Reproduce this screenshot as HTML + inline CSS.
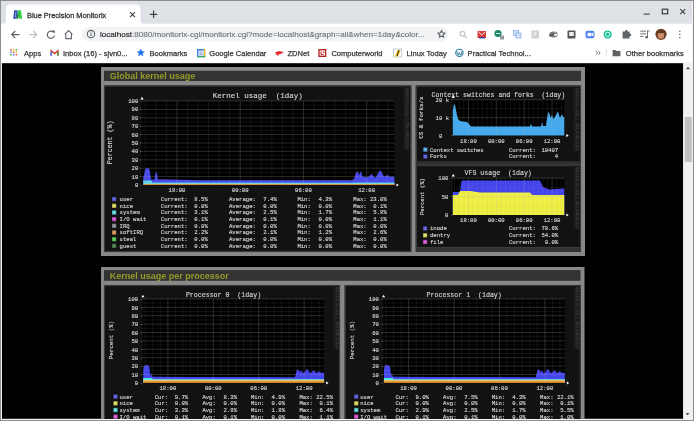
<!DOCTYPE html>
<html><head><meta charset="utf-8"><title>Blue Precision Monitorix</title>
<style>html,body{margin:0;padding:0;width:694px;height:421px;overflow:hidden;background:#000}svg{display:block;will-change:transform}</style></head>
<body><svg width="694" height="421" viewBox="0 0 694 421">
<rect x="0" y="0" width="694" height="421" fill="#8e8e8e"/>
<rect x="1" y="1" width="692" height="419" fill="#f4f4f6"/>
<rect x="1" y="1" width="691" height="22.8" fill="#dee1e6"/>
<path d="M3,24 Q6,24 6,20 L6,9 Q6,4.5 10.5,4.5 L136,4.5 Q140.5,4.5 140.5,9 L140.5,20 Q140.5,24 144,24 Z" fill="#ffffff"/>
<rect x="1" y="23.8" width="691" height="38.7" fill="#ffffff"/>
<path d="M13.2,18.7 L14.2,10.2 L17.4,10.2 L17.8,13 L16.4,18.7 Z" fill="#2a44aa"/><path d="M14.6,17.5 L15.4,11.5 L16.6,11.5 L15.8,17.5 Z" fill="#7a9ae8"/><path d="M17.6,10.2 L21,10.2 L22.2,18.7 L19,18.7 L18.6,15.5 L17.8,18.7 L16.4,18.7 L17.8,13 Z" fill="#36d048"/><path d="M17.8,13 L18.8,15.5 L18.2,18.7 L16.6,18.7 Z" fill="#1f7a3a"/>
<text x="27" y="17.6" font-family="'Liberation Sans', sans-serif" font-size="7.4" fill="#333538" stroke="#333538" stroke-width="0.28">Blue Precision Monitorix</text>
<path d="M130,12.2 L135,17.2 M135,12.2 L130,17.2" stroke="#3c4043" stroke-width="1.1"/>
<path d="M153.6,10.6 L153.6,18 M149.9,14.3 L157.3,14.3" stroke="#3c4043" stroke-width="1.2"/>
<path d="M643.7,14.1 L649.8,14.1" stroke="#3c4043" stroke-width="1.1"/>
<rect x="662.3" y="9.2" width="5.4" height="4.6" fill="none" stroke="#3c4043" stroke-width="1.2"/>
<path d="M680.3,9.2 L685.2,14.2 M685.2,9.2 L680.3,14.2" stroke="#3c4043" stroke-width="1.1"/>
<path d="M12,34.6 L19.5,34.6 M15.3,31 L11.7,34.6 L15.3,38.2" fill="none" stroke="#5f6368" stroke-width="1.2"/>
<path d="M36.5,34.6 L29,34.6 M33.2,31 L36.8,34.6 L33.2,38.2" fill="none" stroke="#bdc1c6" stroke-width="1.2"/>
<path d="M53.6,32.3 A3.6,3.6 0 1 0 54.4,35.6" fill="none" stroke="#5f6368" stroke-width="1.2"/><path d="M51.6,30.4 L54.8,30.4 L54.8,33.6 Z" fill="#5f6368"/>
<path d="M64.8,34.4 L68.6,30.6 L72.4,34.4 M65.8,33.6 L65.8,38.6 L71.4,38.6 L71.4,33.6" fill="none" stroke="#5f6368" stroke-width="1.1"/>
<rect x="81.6" y="26.9" width="367" height="14.5" rx="7.25" fill="#f2f3f5"/>
<circle cx="91" cy="34.1" r="3.7" fill="none" stroke="#5f6368" stroke-width="1.1"/><path d="M91,33.3 L91,36.3 M91,31.7 L91,32.6" stroke="#5f6368" stroke-width="1.1"/>
<text x="100" y="37.3" font-family="'Liberation Sans', sans-serif" font-size="8.1" fill="#202124" stroke="#202124" stroke-width="0.15">localhost<tspan fill="#70757a" stroke="#70757a">:8080/monitorix-cgi/monitorix.cgi?mode=localhost&amp;graph=all&amp;when=1day&amp;color...</tspan></text>
<polygon points="441.50,30.40 442.51,32.82 445.11,33.03 443.13,34.73 443.73,37.27 441.50,35.91 439.27,37.27 439.87,34.73 437.89,33.03 440.49,32.82" fill="none" stroke="#5f6368" stroke-width="1.1" stroke-linejoin="round"/>
<circle cx="462.5" cy="33.8" r="2.4" fill="none" stroke="#c6c6c6" stroke-width="1.2"/><path d="M464.3,35.6 L467,38.3" stroke="#c6c6c6" stroke-width="1.4"/>
<rect x="477.5" y="31" width="8.5" height="7" fill="#d93a3a"/><path d="M478.5,32 L481.8,35 L485,32" fill="none" stroke="#fff" stroke-width="0.9"/><rect x="479" y="37" width="6" height="1.4" fill="#3a3aa0"/>
<circle cx="498" cy="33.5" r="3.6" fill="#1a8a6e"/><path d="M496,33.5 L500,33.5" stroke="#fff" stroke-width="0.9"/><rect x="500" y="35.5" width="4" height="4" fill="#9a9a9a"/>
<rect x="513.5" y="30.5" width="5" height="5" fill="#d5e2f7" stroke="#7aa4e8" stroke-width="0.7"/><rect x="516" y="33" width="5" height="5" fill="#d5e2f7" stroke="#7aa4e8" stroke-width="0.7"/>
<rect x="531.5" y="30.5" width="7.5" height="8" fill="#d0d0d0"/><rect x="533.5" y="32" width="3" height="4" fill="#e6e6e6"/>
<ellipse cx="553.5" cy="34.5" rx="4.2" ry="3" fill="#777"/><circle cx="555.5" cy="34.3" r="1.8" fill="#fff"/><path d="M549,36 L557,33" stroke="#333" stroke-width="0.8"/>
<rect x="567.5" y="30.5" width="8" height="8" rx="1" fill="#555"/><rect x="569.2" y="32" width="4.6" height="4" fill="#eee"/>
<rect x="585.5" y="30.8" width="9" height="7.5" rx="2.2" fill="#4a80f0"/><rect x="587.5" y="32.8" width="3.8" height="3.4" fill="#fff"/><path d="M591.6,33.5 L593.4,32.6 L593.4,36.4 L591.6,35.5 Z" fill="#fff"/>
<circle cx="607.6" cy="34.4" r="4" fill="#15c39a"/><circle cx="607.6" cy="34.4" r="2.2" fill="none" stroke="#fff" stroke-width="0.9"/>
<path d="M622.6,31.5 L625,31.5 Q625.2,29.8 626.4,29.8 Q627.6,29.8 627.6,31.5 L629.6,31.5 L629.6,33.6 Q631.4,33.8 631.4,35 Q631.4,36.2 629.6,36.3 L629.6,38.6 L622.6,38.6 Z" fill="#5f6368"/>
<path d="M640.2,31.2 L646,31.2 M640.2,33.8 L646,33.8 M640.2,36.4 L643.6,36.4" stroke="#5f6368" stroke-width="0.9"/><path d="M647.5,30.5 L647.5,37 M647.5,30.5 L649.5,31.2" stroke="#5f6368" stroke-width="0.9" fill="none"/><circle cx="646.6" cy="37.2" r="1.3" fill="#5f6368"/>
<circle cx="661" cy="34.3" r="5.6" fill="#6b3e24"/><ellipse cx="661" cy="35.3" rx="3.2" ry="3.8" fill="#c98b6a"/><path d="M657.6,33 Q661,28.6 664.4,33" fill="#5a3220"/>
<circle cx="679.8" cy="31.3" r="0.75" fill="#5f6368"/><circle cx="679.8" cy="34.5" r="0.75" fill="#5f6368"/><circle cx="679.8" cy="37.7" r="0.75" fill="#5f6368"/>
<rect x="10.2" y="49.2" width="1.5" height="1.5" fill="#ea4335"/>
<rect x="12.9" y="49.2" width="1.5" height="1.5" fill="#fbbc04"/>
<rect x="15.6" y="49.2" width="1.5" height="1.5" fill="#34a853"/>
<rect x="10.2" y="51.6" width="1.5" height="1.5" fill="#4285f4"/>
<rect x="12.9" y="51.6" width="1.5" height="1.5" fill="#ea4335"/>
<rect x="15.6" y="51.6" width="1.5" height="1.5" fill="#fbbc04"/>
<rect x="10.2" y="54.0" width="1.5" height="1.5" fill="#34a853"/>
<rect x="12.9" y="54.0" width="1.5" height="1.5" fill="#4285f4"/>
<rect x="15.6" y="54.0" width="1.5" height="1.5" fill="#ea4335"/>
<text x="24" y="55.6" font-family="'Liberation Sans', sans-serif" font-size="7.55" fill="#333538" stroke="#333538" stroke-width="0.25">Apps</text>
<path d="M51.2,55.8 L51.2,50.8 L54.6,53.6 L58,50.8 L58,55.8" fill="none" stroke="#ea4335" stroke-width="1.5"/><path d="M51.2,55.8 L51.2,51.4" stroke="#4285f4" stroke-width="1.5"/><path d="M58,55.8 L58,51.4" stroke="#34a853" stroke-width="1.5"/>
<text x="63" y="55.6" font-family="'Liberation Sans', sans-serif" font-size="7.55" fill="#333538" stroke="#333538" stroke-width="0.25">Inbox (16) - sjvn0...</text>
<polygon points="140.80,49.00 141.81,51.42 144.41,51.63 142.43,53.33 143.03,55.87 140.80,54.51 138.57,55.87 139.17,53.33 137.19,51.63 139.79,51.42" fill="#1a73e8" stroke="#1a73e8" stroke-width="0.5" stroke-linejoin="round"/>
<text x="149.5" y="55.6" font-family="'Liberation Sans', sans-serif" font-size="7.55" fill="#333538" stroke="#333538" stroke-width="0.25">Bookmarks</text>
<rect x="197" y="49" width="8.2" height="8.2" fill="#4285f4"/><rect x="203.8" y="49" width="1.4" height="8.2" fill="#fbbc04"/><rect x="197" y="55.8" width="8.2" height="1.4" fill="#34a853"/><rect x="198.4" y="50.6" width="5.4" height="5.2" fill="#f4f7fc"/><path d="M199.4,52 L202.8,52 M199.4,53.3 L202.8,53.3 M199.4,54.6 L202.8,54.6" stroke="#6a7fa8" stroke-width="0.6"/>
<text x="209.3" y="55.6" font-family="'Liberation Sans', sans-serif" font-size="7.55" fill="#333538" stroke="#333538" stroke-width="0.25">Google Calendar</text>
<path d="M275,52.6 L279,51 L284,52.2 L280,54.2 L277,55 Z" fill="#e3302f"/><path d="M276,54 L278.5,55.5" stroke="#e3302f" stroke-width="1"/>
<text x="287.5" y="55.6" font-family="'Liberation Sans', sans-serif" font-size="7.55" fill="#333538" stroke="#333538" stroke-width="0.25">ZDNet</text>
<rect x="318.3" y="49" width="8" height="8" fill="#b3261e"/><rect x="319.6" y="50.3" width="5.4" height="5.4" fill="#f7e6e6"/><path d="M321,51.5 L321,54.5 L323.6,54.5 M323.6,51.5 L323.6,53" stroke="#b3261e" stroke-width="0.9" fill="none"/>
<text x="331.4" y="55.6" font-family="'Liberation Sans', sans-serif" font-size="7.55" fill="#333538" stroke="#333538" stroke-width="0.25">Computerworld</text>
<rect x="393.3" y="49" width="8.5" height="8" fill="#fff" stroke="#9ab" stroke-width="0.6"/><path d="M395,56.5 L397.5,50 L400.5,50 L398,56.5 Z" fill="#f2c20c"/><path d="M397,56 L399,50.2" stroke="#222" stroke-width="1"/>
<text x="406.6" y="55.6" font-family="'Liberation Sans', sans-serif" font-size="7.55" fill="#333538" stroke="#333538" stroke-width="0.25">Linux Today</text>
<circle cx="459.4" cy="52.9" r="4.2" fill="#21759b"/><circle cx="459.4" cy="52.9" r="3.2" fill="#fff"/><path d="M456.6,51 L458,55.5 L459.4,52.5 L460.8,55.5 L462.2,51" fill="none" stroke="#21759b" stroke-width="0.9"/>
<text x="467.6" y="55.6" font-family="'Liberation Sans', sans-serif" font-size="7.55" fill="#333538" stroke="#333538" stroke-width="0.25">Practical Technol...</text>
<path d="M595.8,51.2 L597.6,52.9 L595.8,54.6 M598.4,51.2 L600.2,52.9 L598.4,54.6" fill="none" stroke="#5f6368" stroke-width="0.9"/>
<rect x="606.2" y="49" width="0.7" height="8" fill="#dadce0"/>
<path d="M612.6,50 L615.6,50 L616.6,51 L620.4,51 L620.4,56.2 L612.6,56.2 Z" fill="#5f6368"/>
<text x="625.8" y="55.6" font-family="'Liberation Sans', sans-serif" font-size="7.55" fill="#333538" stroke="#333538" stroke-width="0.25">Other bookmarks</text>
<rect x="2" y="63.2" width="681.2" height="355.6" fill="#000"/>
<rect x="683.2" y="62.5" width="9.6" height="356.3" fill="#f1f1f1"/>
<rect x="684.8" y="117" width="7" height="45" fill="#c1c1c1"/>
<path d="M685.8,69.2 L690.2,69.2 L688,66.8 Z" fill="#505050"/>
<path d="M685.5,413 L689.5,413 L687.5,415.2 Z" fill="#505050"/>
<svg x="2" y="62.5" width="681.5" height="356.5" viewBox="2 62.5 681.5 356.5" overflow="hidden">
<defs><linearGradient id="og" x1="0" y1="0" x2="0" y2="1"><stop offset="0" stop-color="#e8d890"/><stop offset="0.5" stop-color="#e0a040"/><stop offset="1" stop-color="#c87818"/></linearGradient></defs>
<rect x="101" y="67" width="484" height="189" fill="#888888"/>
<rect x="104" y="70.8" width="477" height="10.2" fill="#333333"/>
<text x="109.8" y="78.7" font-family="'Liberation Sans', sans-serif" font-size="9" font-weight="bold" fill="#979a28">Global kernel usage</text>
<rect x="415.5" y="85.5" width="165.5" height="166.5" fill="#333333"/>
<rect x="104" y="85.5" width="307.3" height="166.5" fill="#121212"/>
<rect x="104.5" y="86.0" width="306.3" height="165.5" fill="none" stroke="#3a3a3a" stroke-width="1.2"/>
<rect x="141.5" y="101.0" width="252.89999999999998" height="84.0" fill="#000"/>
<polygon points="143.20,185.00 143.20,177.00 144.00,175.50 145.00,170.00 146.00,167.80 147.00,169.50 148.00,167.50 149.00,168.50 150.00,172.00 151.00,179.50 154.50,179.80 155.50,173.00 156.30,172.20 157.20,173.50 157.80,179.30 170.00,179.40 200.00,180.20 352.00,180.20 354.00,179.00 355.50,174.00 357.50,170.80 359.00,175.00 361.00,171.00 362.50,176.50 366.00,177.20 369.00,176.50 371.50,174.00 374.00,177.00 376.00,177.50 378.00,173.00 380.50,170.10 382.00,173.00 384.00,176.50 386.00,176.00 387.50,174.80 389.50,176.80 392.00,176.50 394.40,177.00 394.40,185.00" fill="#4848ee"/>
<polygon points="143.20,185.00 143.20,180.40 151.50,180.40 152.20,182.60 352.00,182.80 355.00,182.40 394.40,182.40 394.40,185.00" fill="#5ad8ee"/>
<polygon points="143.20,185.00 143.20,183.70 394.40,183.70 394.40,185.00" fill="url(#og)"/>
<line x1="141.5" y1="180.80" x2="394.4" y2="180.80" stroke="rgba(160,160,140,0.17)" stroke-width="0.6"/>
<line x1="141.5" y1="172.40" x2="394.4" y2="172.40" stroke="rgba(160,160,140,0.17)" stroke-width="0.6"/>
<line x1="141.5" y1="164.00" x2="394.4" y2="164.00" stroke="rgba(160,160,140,0.17)" stroke-width="0.6"/>
<line x1="141.5" y1="155.60" x2="394.4" y2="155.60" stroke="rgba(160,160,140,0.17)" stroke-width="0.6"/>
<line x1="141.5" y1="147.20" x2="394.4" y2="147.20" stroke="rgba(160,160,140,0.17)" stroke-width="0.6"/>
<line x1="141.5" y1="138.80" x2="394.4" y2="138.80" stroke="rgba(160,160,140,0.17)" stroke-width="0.6"/>
<line x1="141.5" y1="130.40" x2="394.4" y2="130.40" stroke="rgba(160,160,140,0.17)" stroke-width="0.6"/>
<line x1="141.5" y1="122.00" x2="394.4" y2="122.00" stroke="rgba(160,160,140,0.17)" stroke-width="0.6"/>
<line x1="141.5" y1="113.60" x2="394.4" y2="113.60" stroke="rgba(160,160,140,0.17)" stroke-width="0.6"/>
<line x1="141.5" y1="105.20" x2="394.4" y2="105.20" stroke="rgba(160,160,140,0.17)" stroke-width="0.6"/>
<line x1="141.5" y1="176.60" x2="394.4" y2="176.60" stroke="rgba(175,180,165,0.4)" stroke-width="0.6"/>
<line x1="141.5" y1="168.20" x2="394.4" y2="168.20" stroke="rgba(175,180,165,0.4)" stroke-width="0.6"/>
<line x1="141.5" y1="159.80" x2="394.4" y2="159.80" stroke="rgba(175,180,165,0.4)" stroke-width="0.6"/>
<line x1="141.5" y1="151.40" x2="394.4" y2="151.40" stroke="rgba(175,180,165,0.4)" stroke-width="0.6"/>
<line x1="141.5" y1="143.00" x2="394.4" y2="143.00" stroke="rgba(175,180,165,0.4)" stroke-width="0.6"/>
<line x1="141.5" y1="134.60" x2="394.4" y2="134.60" stroke="rgba(175,180,165,0.4)" stroke-width="0.6"/>
<line x1="141.5" y1="126.20" x2="394.4" y2="126.20" stroke="rgba(175,180,165,0.4)" stroke-width="0.6"/>
<line x1="141.5" y1="117.80" x2="394.4" y2="117.80" stroke="rgba(175,180,165,0.4)" stroke-width="0.6"/>
<line x1="141.5" y1="109.40" x2="394.4" y2="109.40" stroke="rgba(175,180,165,0.4)" stroke-width="0.6"/>
<line x1="141.5" y1="101.00" x2="394.4" y2="101.00" stroke="rgba(175,180,165,0.4)" stroke-width="0.6"/>
<line x1="145.37" y1="101.0" x2="145.37" y2="185.0" stroke="rgba(160,160,140,0.17)" stroke-width="0.6"/>
<line x1="155.90" y1="101.0" x2="155.90" y2="185.0" stroke="rgba(160,160,140,0.17)" stroke-width="0.6"/>
<line x1="166.44" y1="101.0" x2="166.44" y2="185.0" stroke="rgba(160,160,140,0.17)" stroke-width="0.6"/>
<line x1="187.52" y1="101.0" x2="187.52" y2="185.0" stroke="rgba(160,160,140,0.17)" stroke-width="0.6"/>
<line x1="198.05" y1="101.0" x2="198.05" y2="185.0" stroke="rgba(160,160,140,0.17)" stroke-width="0.6"/>
<line x1="208.59" y1="101.0" x2="208.59" y2="185.0" stroke="rgba(160,160,140,0.17)" stroke-width="0.6"/>
<line x1="219.13" y1="101.0" x2="219.13" y2="185.0" stroke="rgba(160,160,140,0.17)" stroke-width="0.6"/>
<line x1="229.67" y1="101.0" x2="229.67" y2="185.0" stroke="rgba(160,160,140,0.17)" stroke-width="0.6"/>
<line x1="250.74" y1="101.0" x2="250.74" y2="185.0" stroke="rgba(160,160,140,0.17)" stroke-width="0.6"/>
<line x1="261.28" y1="101.0" x2="261.28" y2="185.0" stroke="rgba(160,160,140,0.17)" stroke-width="0.6"/>
<line x1="271.82" y1="101.0" x2="271.82" y2="185.0" stroke="rgba(160,160,140,0.17)" stroke-width="0.6"/>
<line x1="282.35" y1="101.0" x2="282.35" y2="185.0" stroke="rgba(160,160,140,0.17)" stroke-width="0.6"/>
<line x1="292.89" y1="101.0" x2="292.89" y2="185.0" stroke="rgba(160,160,140,0.17)" stroke-width="0.6"/>
<line x1="313.97" y1="101.0" x2="313.97" y2="185.0" stroke="rgba(160,160,140,0.17)" stroke-width="0.6"/>
<line x1="324.50" y1="101.0" x2="324.50" y2="185.0" stroke="rgba(160,160,140,0.17)" stroke-width="0.6"/>
<line x1="335.04" y1="101.0" x2="335.04" y2="185.0" stroke="rgba(160,160,140,0.17)" stroke-width="0.6"/>
<line x1="345.58" y1="101.0" x2="345.58" y2="185.0" stroke="rgba(160,160,140,0.17)" stroke-width="0.6"/>
<line x1="356.12" y1="101.0" x2="356.12" y2="185.0" stroke="rgba(160,160,140,0.17)" stroke-width="0.6"/>
<line x1="377.19" y1="101.0" x2="377.19" y2="185.0" stroke="rgba(160,160,140,0.17)" stroke-width="0.6"/>
<line x1="387.73" y1="101.0" x2="387.73" y2="185.0" stroke="rgba(160,160,140,0.17)" stroke-width="0.6"/>
<line x1="176.98" y1="101.0" x2="176.98" y2="185.0" stroke="rgba(175,180,165,0.4)" stroke-width="0.6"/>
<line x1="240.20" y1="101.0" x2="240.20" y2="185.0" stroke="rgba(175,180,165,0.4)" stroke-width="0.6"/>
<line x1="303.43" y1="101.0" x2="303.43" y2="185.0" stroke="rgba(175,180,165,0.4)" stroke-width="0.6"/>
<line x1="366.65" y1="101.0" x2="366.65" y2="185.0" stroke="rgba(175,180,165,0.4)" stroke-width="0.6"/>
<line x1="139.7" y1="185.10" x2="141.5" y2="185.10" stroke="#777" stroke-width="0.6"/>
<line x1="139.7" y1="176.70" x2="141.5" y2="176.70" stroke="#777" stroke-width="0.6"/>
<line x1="139.7" y1="168.30" x2="141.5" y2="168.30" stroke="#777" stroke-width="0.6"/>
<line x1="139.7" y1="159.90" x2="141.5" y2="159.90" stroke="#777" stroke-width="0.6"/>
<line x1="139.7" y1="151.50" x2="141.5" y2="151.50" stroke="#777" stroke-width="0.6"/>
<line x1="139.7" y1="143.10" x2="141.5" y2="143.10" stroke="#777" stroke-width="0.6"/>
<line x1="139.7" y1="134.70" x2="141.5" y2="134.70" stroke="#777" stroke-width="0.6"/>
<line x1="139.7" y1="126.30" x2="141.5" y2="126.30" stroke="#777" stroke-width="0.6"/>
<line x1="139.7" y1="117.90" x2="141.5" y2="117.90" stroke="#777" stroke-width="0.6"/>
<line x1="139.7" y1="109.50" x2="141.5" y2="109.50" stroke="#777" stroke-width="0.6"/>
<line x1="139.7" y1="101.10" x2="141.5" y2="101.10" stroke="#777" stroke-width="0.6"/>
<path d="M140.4,99.4 L143.6,99.4 L142.0,96.8 Z" fill="#fff"/>
<path d="M396.4,183.4 L396.4,186.6 L398.79999999999995,185.0 Z" fill="#fff"/>
<text x="257.80" y="98.10" font-family="'Liberation Mono', monospace" font-size="7.5" fill="#d0d0d0" stroke="#d0d0d0" stroke-width="0.16" text-anchor="middle" style="white-space:pre" >Kernel usage  (1day)</text>
<text x="112.20" y="142.40" font-family="'Liberation Mono', monospace" font-size="6.6" fill="#d0d0d0" stroke="#d0d0d0" stroke-width="0.16" text-anchor="middle" style="white-space:pre" transform="rotate(-90 112.2 142.4)">Percent (%)</text>
<text x="138.30" y="187.00" font-family="'Liberation Mono', monospace" font-size="5.6" fill="#d0d0d0" stroke="#d0d0d0" stroke-width="0.16" text-anchor="end" style="white-space:pre" >0</text>
<text x="138.30" y="178.60" font-family="'Liberation Mono', monospace" font-size="5.6" fill="#d0d0d0" stroke="#d0d0d0" stroke-width="0.16" text-anchor="end" style="white-space:pre" >10</text>
<text x="138.30" y="170.20" font-family="'Liberation Mono', monospace" font-size="5.6" fill="#d0d0d0" stroke="#d0d0d0" stroke-width="0.16" text-anchor="end" style="white-space:pre" >20</text>
<text x="138.30" y="161.80" font-family="'Liberation Mono', monospace" font-size="5.6" fill="#d0d0d0" stroke="#d0d0d0" stroke-width="0.16" text-anchor="end" style="white-space:pre" >30</text>
<text x="138.30" y="153.40" font-family="'Liberation Mono', monospace" font-size="5.6" fill="#d0d0d0" stroke="#d0d0d0" stroke-width="0.16" text-anchor="end" style="white-space:pre" >40</text>
<text x="138.30" y="145.00" font-family="'Liberation Mono', monospace" font-size="5.6" fill="#d0d0d0" stroke="#d0d0d0" stroke-width="0.16" text-anchor="end" style="white-space:pre" >50</text>
<text x="138.30" y="136.60" font-family="'Liberation Mono', monospace" font-size="5.6" fill="#d0d0d0" stroke="#d0d0d0" stroke-width="0.16" text-anchor="end" style="white-space:pre" >60</text>
<text x="138.30" y="128.20" font-family="'Liberation Mono', monospace" font-size="5.6" fill="#d0d0d0" stroke="#d0d0d0" stroke-width="0.16" text-anchor="end" style="white-space:pre" >70</text>
<text x="138.30" y="119.80" font-family="'Liberation Mono', monospace" font-size="5.6" fill="#d0d0d0" stroke="#d0d0d0" stroke-width="0.16" text-anchor="end" style="white-space:pre" >80</text>
<text x="138.30" y="111.40" font-family="'Liberation Mono', monospace" font-size="5.6" fill="#d0d0d0" stroke="#d0d0d0" stroke-width="0.16" text-anchor="end" style="white-space:pre" >90</text>
<text x="138.30" y="103.00" font-family="'Liberation Mono', monospace" font-size="5.6" fill="#d0d0d0" stroke="#d0d0d0" stroke-width="0.16" text-anchor="end" style="white-space:pre" >100</text>
<text x="176.98" y="192.40" font-family="'Liberation Mono', monospace" font-size="5.6" fill="#d0d0d0" stroke="#d0d0d0" stroke-width="0.16" text-anchor="middle" style="white-space:pre" >18:00</text>
<text x="240.20" y="192.40" font-family="'Liberation Mono', monospace" font-size="5.6" fill="#d0d0d0" stroke="#d0d0d0" stroke-width="0.16" text-anchor="middle" style="white-space:pre" >00:00</text>
<text x="303.43" y="192.40" font-family="'Liberation Mono', monospace" font-size="5.6" fill="#d0d0d0" stroke="#d0d0d0" stroke-width="0.16" text-anchor="middle" style="white-space:pre" >06:00</text>
<text x="366.65" y="192.40" font-family="'Liberation Mono', monospace" font-size="5.6" fill="#d0d0d0" stroke="#d0d0d0" stroke-width="0.16" text-anchor="middle" style="white-space:pre" >12:00</text>
<rect x="112" y="197.0" width="4.2" height="4.2" fill="#6464e4"/>
<rect x="112.3" y="197.29999999999998" width="3.6" height="3.6" fill="none" stroke="#000" stroke-opacity="0.35" stroke-width="0.6"/>
<text x="119.60" y="201.00" font-family="'Liberation Mono', monospace" font-size="5.6" fill="#d0d0d0" stroke="#d0d0d0" stroke-width="0.16" text-anchor="start" style="white-space:pre" >user</text>
<text x="160.80" y="201.00" font-family="'Liberation Mono', monospace" font-size="5.6" fill="#d0d0d0" stroke="#d0d0d0" stroke-width="0.16" text-anchor="start" style="white-space:pre" >Current:</text>
<text x="207.80" y="201.00" font-family="'Liberation Mono', monospace" font-size="5.6" fill="#d0d0d0" stroke="#d0d0d0" stroke-width="0.16" text-anchor="end" style="white-space:pre" >8.5%</text>
<text x="229.00" y="201.00" font-family="'Liberation Mono', monospace" font-size="5.6" fill="#d0d0d0" stroke="#d0d0d0" stroke-width="0.16" text-anchor="start" style="white-space:pre" >Average:</text>
<text x="276.80" y="201.00" font-family="'Liberation Mono', monospace" font-size="5.6" fill="#d0d0d0" stroke="#d0d0d0" stroke-width="0.16" text-anchor="end" style="white-space:pre" >7.4%</text>
<text x="297.40" y="201.00" font-family="'Liberation Mono', monospace" font-size="5.6" fill="#d0d0d0" stroke="#d0d0d0" stroke-width="0.16" text-anchor="start" style="white-space:pre" >Min:</text>
<text x="332.00" y="201.00" font-family="'Liberation Mono', monospace" font-size="5.6" fill="#d0d0d0" stroke="#d0d0d0" stroke-width="0.16" text-anchor="end" style="white-space:pre" >4.3%</text>
<text x="353.30" y="201.00" font-family="'Liberation Mono', monospace" font-size="5.6" fill="#d0d0d0" stroke="#d0d0d0" stroke-width="0.16" text-anchor="start" style="white-space:pre" >Max:</text>
<text x="386.80" y="201.00" font-family="'Liberation Mono', monospace" font-size="5.6" fill="#d0d0d0" stroke="#d0d0d0" stroke-width="0.16" text-anchor="end" style="white-space:pre" >23.0%</text>
<rect x="112" y="203.70000000000002" width="4.2" height="4.2" fill="#e4e46a"/>
<rect x="112.3" y="204.0" width="3.6" height="3.6" fill="none" stroke="#000" stroke-opacity="0.35" stroke-width="0.6"/>
<text x="119.60" y="207.70" font-family="'Liberation Mono', monospace" font-size="5.6" fill="#d0d0d0" stroke="#d0d0d0" stroke-width="0.16" text-anchor="start" style="white-space:pre" >nice</text>
<text x="160.80" y="207.70" font-family="'Liberation Mono', monospace" font-size="5.6" fill="#d0d0d0" stroke="#d0d0d0" stroke-width="0.16" text-anchor="start" style="white-space:pre" >Current:</text>
<text x="207.80" y="207.70" font-family="'Liberation Mono', monospace" font-size="5.6" fill="#d0d0d0" stroke="#d0d0d0" stroke-width="0.16" text-anchor="end" style="white-space:pre" >0.0%</text>
<text x="229.00" y="207.70" font-family="'Liberation Mono', monospace" font-size="5.6" fill="#d0d0d0" stroke="#d0d0d0" stroke-width="0.16" text-anchor="start" style="white-space:pre" >Average:</text>
<text x="276.80" y="207.70" font-family="'Liberation Mono', monospace" font-size="5.6" fill="#d0d0d0" stroke="#d0d0d0" stroke-width="0.16" text-anchor="end" style="white-space:pre" >0.0%</text>
<text x="297.40" y="207.70" font-family="'Liberation Mono', monospace" font-size="5.6" fill="#d0d0d0" stroke="#d0d0d0" stroke-width="0.16" text-anchor="start" style="white-space:pre" >Min:</text>
<text x="332.00" y="207.70" font-family="'Liberation Mono', monospace" font-size="5.6" fill="#d0d0d0" stroke="#d0d0d0" stroke-width="0.16" text-anchor="end" style="white-space:pre" >0.0%</text>
<text x="353.30" y="207.70" font-family="'Liberation Mono', monospace" font-size="5.6" fill="#d0d0d0" stroke="#d0d0d0" stroke-width="0.16" text-anchor="start" style="white-space:pre" >Max:</text>
<text x="386.80" y="207.70" font-family="'Liberation Mono', monospace" font-size="5.6" fill="#d0d0d0" stroke="#d0d0d0" stroke-width="0.16" text-anchor="end" style="white-space:pre" >0.1%</text>
<rect x="112" y="210.4" width="4.2" height="4.2" fill="#6ae4ea"/>
<rect x="112.3" y="210.7" width="3.6" height="3.6" fill="none" stroke="#000" stroke-opacity="0.35" stroke-width="0.6"/>
<text x="119.60" y="214.40" font-family="'Liberation Mono', monospace" font-size="5.6" fill="#d0d0d0" stroke="#d0d0d0" stroke-width="0.16" text-anchor="start" style="white-space:pre" >system</text>
<text x="160.80" y="214.40" font-family="'Liberation Mono', monospace" font-size="5.6" fill="#d0d0d0" stroke="#d0d0d0" stroke-width="0.16" text-anchor="start" style="white-space:pre" >Current:</text>
<text x="207.80" y="214.40" font-family="'Liberation Mono', monospace" font-size="5.6" fill="#d0d0d0" stroke="#d0d0d0" stroke-width="0.16" text-anchor="end" style="white-space:pre" >3.1%</text>
<text x="229.00" y="214.40" font-family="'Liberation Mono', monospace" font-size="5.6" fill="#d0d0d0" stroke="#d0d0d0" stroke-width="0.16" text-anchor="start" style="white-space:pre" >Average:</text>
<text x="276.80" y="214.40" font-family="'Liberation Mono', monospace" font-size="5.6" fill="#d0d0d0" stroke="#d0d0d0" stroke-width="0.16" text-anchor="end" style="white-space:pre" >2.5%</text>
<text x="297.40" y="214.40" font-family="'Liberation Mono', monospace" font-size="5.6" fill="#d0d0d0" stroke="#d0d0d0" stroke-width="0.16" text-anchor="start" style="white-space:pre" >Min:</text>
<text x="332.00" y="214.40" font-family="'Liberation Mono', monospace" font-size="5.6" fill="#d0d0d0" stroke="#d0d0d0" stroke-width="0.16" text-anchor="end" style="white-space:pre" >1.7%</text>
<text x="353.30" y="214.40" font-family="'Liberation Mono', monospace" font-size="5.6" fill="#d0d0d0" stroke="#d0d0d0" stroke-width="0.16" text-anchor="start" style="white-space:pre" >Max:</text>
<text x="386.80" y="214.40" font-family="'Liberation Mono', monospace" font-size="5.6" fill="#d0d0d0" stroke="#d0d0d0" stroke-width="0.16" text-anchor="end" style="white-space:pre" >5.8%</text>
<rect x="112" y="217.0" width="4.2" height="4.2" fill="#e060e0"/>
<rect x="112.3" y="217.29999999999998" width="3.6" height="3.6" fill="none" stroke="#000" stroke-opacity="0.35" stroke-width="0.6"/>
<text x="119.60" y="221.00" font-family="'Liberation Mono', monospace" font-size="5.6" fill="#d0d0d0" stroke="#d0d0d0" stroke-width="0.16" text-anchor="start" style="white-space:pre" >I/O wait</text>
<text x="160.80" y="221.00" font-family="'Liberation Mono', monospace" font-size="5.6" fill="#d0d0d0" stroke="#d0d0d0" stroke-width="0.16" text-anchor="start" style="white-space:pre" >Current:</text>
<text x="207.80" y="221.00" font-family="'Liberation Mono', monospace" font-size="5.6" fill="#d0d0d0" stroke="#d0d0d0" stroke-width="0.16" text-anchor="end" style="white-space:pre" >0.1%</text>
<text x="229.00" y="221.00" font-family="'Liberation Mono', monospace" font-size="5.6" fill="#d0d0d0" stroke="#d0d0d0" stroke-width="0.16" text-anchor="start" style="white-space:pre" >Average:</text>
<text x="276.80" y="221.00" font-family="'Liberation Mono', monospace" font-size="5.6" fill="#d0d0d0" stroke="#d0d0d0" stroke-width="0.16" text-anchor="end" style="white-space:pre" >0.1%</text>
<text x="297.40" y="221.00" font-family="'Liberation Mono', monospace" font-size="5.6" fill="#d0d0d0" stroke="#d0d0d0" stroke-width="0.16" text-anchor="start" style="white-space:pre" >Min:</text>
<text x="332.00" y="221.00" font-family="'Liberation Mono', monospace" font-size="5.6" fill="#d0d0d0" stroke="#d0d0d0" stroke-width="0.16" text-anchor="end" style="white-space:pre" >0.0%</text>
<text x="353.30" y="221.00" font-family="'Liberation Mono', monospace" font-size="5.6" fill="#d0d0d0" stroke="#d0d0d0" stroke-width="0.16" text-anchor="start" style="white-space:pre" >Max:</text>
<text x="386.80" y="221.00" font-family="'Liberation Mono', monospace" font-size="5.6" fill="#d0d0d0" stroke="#d0d0d0" stroke-width="0.16" text-anchor="end" style="white-space:pre" >1.1%</text>
<rect x="112" y="223.70000000000002" width="4.2" height="4.2" fill="#9a9aa2"/>
<rect x="112.3" y="224.0" width="3.6" height="3.6" fill="none" stroke="#000" stroke-opacity="0.35" stroke-width="0.6"/>
<text x="119.60" y="227.70" font-family="'Liberation Mono', monospace" font-size="5.6" fill="#d0d0d0" stroke="#d0d0d0" stroke-width="0.16" text-anchor="start" style="white-space:pre" >IRQ</text>
<text x="160.80" y="227.70" font-family="'Liberation Mono', monospace" font-size="5.6" fill="#d0d0d0" stroke="#d0d0d0" stroke-width="0.16" text-anchor="start" style="white-space:pre" >Current:</text>
<text x="207.80" y="227.70" font-family="'Liberation Mono', monospace" font-size="5.6" fill="#d0d0d0" stroke="#d0d0d0" stroke-width="0.16" text-anchor="end" style="white-space:pre" >0.0%</text>
<text x="229.00" y="227.70" font-family="'Liberation Mono', monospace" font-size="5.6" fill="#d0d0d0" stroke="#d0d0d0" stroke-width="0.16" text-anchor="start" style="white-space:pre" >Average:</text>
<text x="276.80" y="227.70" font-family="'Liberation Mono', monospace" font-size="5.6" fill="#d0d0d0" stroke="#d0d0d0" stroke-width="0.16" text-anchor="end" style="white-space:pre" >0.0%</text>
<text x="297.40" y="227.70" font-family="'Liberation Mono', monospace" font-size="5.6" fill="#d0d0d0" stroke="#d0d0d0" stroke-width="0.16" text-anchor="start" style="white-space:pre" >Min:</text>
<text x="332.00" y="227.70" font-family="'Liberation Mono', monospace" font-size="5.6" fill="#d0d0d0" stroke="#d0d0d0" stroke-width="0.16" text-anchor="end" style="white-space:pre" >0.0%</text>
<text x="353.30" y="227.70" font-family="'Liberation Mono', monospace" font-size="5.6" fill="#d0d0d0" stroke="#d0d0d0" stroke-width="0.16" text-anchor="start" style="white-space:pre" >Max:</text>
<text x="386.80" y="227.70" font-family="'Liberation Mono', monospace" font-size="5.6" fill="#d0d0d0" stroke="#d0d0d0" stroke-width="0.16" text-anchor="end" style="white-space:pre" >0.0%</text>
<rect x="112" y="230.4" width="4.2" height="4.2" fill="#e0a060"/>
<rect x="112.3" y="230.7" width="3.6" height="3.6" fill="none" stroke="#000" stroke-opacity="0.35" stroke-width="0.6"/>
<text x="119.60" y="234.40" font-family="'Liberation Mono', monospace" font-size="5.6" fill="#d0d0d0" stroke="#d0d0d0" stroke-width="0.16" text-anchor="start" style="white-space:pre" >softIRQ</text>
<text x="160.80" y="234.40" font-family="'Liberation Mono', monospace" font-size="5.6" fill="#d0d0d0" stroke="#d0d0d0" stroke-width="0.16" text-anchor="start" style="white-space:pre" >Current:</text>
<text x="207.80" y="234.40" font-family="'Liberation Mono', monospace" font-size="5.6" fill="#d0d0d0" stroke="#d0d0d0" stroke-width="0.16" text-anchor="end" style="white-space:pre" >2.2%</text>
<text x="229.00" y="234.40" font-family="'Liberation Mono', monospace" font-size="5.6" fill="#d0d0d0" stroke="#d0d0d0" stroke-width="0.16" text-anchor="start" style="white-space:pre" >Average:</text>
<text x="276.80" y="234.40" font-family="'Liberation Mono', monospace" font-size="5.6" fill="#d0d0d0" stroke="#d0d0d0" stroke-width="0.16" text-anchor="end" style="white-space:pre" >2.1%</text>
<text x="297.40" y="234.40" font-family="'Liberation Mono', monospace" font-size="5.6" fill="#d0d0d0" stroke="#d0d0d0" stroke-width="0.16" text-anchor="start" style="white-space:pre" >Min:</text>
<text x="332.00" y="234.40" font-family="'Liberation Mono', monospace" font-size="5.6" fill="#d0d0d0" stroke="#d0d0d0" stroke-width="0.16" text-anchor="end" style="white-space:pre" >1.2%</text>
<text x="353.30" y="234.40" font-family="'Liberation Mono', monospace" font-size="5.6" fill="#d0d0d0" stroke="#d0d0d0" stroke-width="0.16" text-anchor="start" style="white-space:pre" >Max:</text>
<text x="386.80" y="234.40" font-family="'Liberation Mono', monospace" font-size="5.6" fill="#d0d0d0" stroke="#d0d0d0" stroke-width="0.16" text-anchor="end" style="white-space:pre" >2.6%</text>
<rect x="112" y="237.1" width="4.2" height="4.2" fill="#5ed85e"/>
<rect x="112.3" y="237.39999999999998" width="3.6" height="3.6" fill="none" stroke="#000" stroke-opacity="0.35" stroke-width="0.6"/>
<text x="119.60" y="241.10" font-family="'Liberation Mono', monospace" font-size="5.6" fill="#d0d0d0" stroke="#d0d0d0" stroke-width="0.16" text-anchor="start" style="white-space:pre" >steal</text>
<text x="160.80" y="241.10" font-family="'Liberation Mono', monospace" font-size="5.6" fill="#d0d0d0" stroke="#d0d0d0" stroke-width="0.16" text-anchor="start" style="white-space:pre" >Current:</text>
<text x="207.80" y="241.10" font-family="'Liberation Mono', monospace" font-size="5.6" fill="#d0d0d0" stroke="#d0d0d0" stroke-width="0.16" text-anchor="end" style="white-space:pre" >0.0%</text>
<text x="229.00" y="241.10" font-family="'Liberation Mono', monospace" font-size="5.6" fill="#d0d0d0" stroke="#d0d0d0" stroke-width="0.16" text-anchor="start" style="white-space:pre" >Average:</text>
<text x="276.80" y="241.10" font-family="'Liberation Mono', monospace" font-size="5.6" fill="#d0d0d0" stroke="#d0d0d0" stroke-width="0.16" text-anchor="end" style="white-space:pre" >0.0%</text>
<text x="297.40" y="241.10" font-family="'Liberation Mono', monospace" font-size="5.6" fill="#d0d0d0" stroke="#d0d0d0" stroke-width="0.16" text-anchor="start" style="white-space:pre" >Min:</text>
<text x="332.00" y="241.10" font-family="'Liberation Mono', monospace" font-size="5.6" fill="#d0d0d0" stroke="#d0d0d0" stroke-width="0.16" text-anchor="end" style="white-space:pre" >0.0%</text>
<text x="353.30" y="241.10" font-family="'Liberation Mono', monospace" font-size="5.6" fill="#d0d0d0" stroke="#d0d0d0" stroke-width="0.16" text-anchor="start" style="white-space:pre" >Max:</text>
<text x="386.80" y="241.10" font-family="'Liberation Mono', monospace" font-size="5.6" fill="#d0d0d0" stroke="#d0d0d0" stroke-width="0.16" text-anchor="end" style="white-space:pre" >0.0%</text>
<rect x="112" y="243.8" width="4.2" height="4.2" fill="#5a8c5a"/>
<rect x="112.3" y="244.1" width="3.6" height="3.6" fill="none" stroke="#000" stroke-opacity="0.35" stroke-width="0.6"/>
<text x="119.60" y="247.80" font-family="'Liberation Mono', monospace" font-size="5.6" fill="#d0d0d0" stroke="#d0d0d0" stroke-width="0.16" text-anchor="start" style="white-space:pre" >guest</text>
<text x="160.80" y="247.80" font-family="'Liberation Mono', monospace" font-size="5.6" fill="#d0d0d0" stroke="#d0d0d0" stroke-width="0.16" text-anchor="start" style="white-space:pre" >Current:</text>
<text x="207.80" y="247.80" font-family="'Liberation Mono', monospace" font-size="5.6" fill="#d0d0d0" stroke="#d0d0d0" stroke-width="0.16" text-anchor="end" style="white-space:pre" >0.0%</text>
<text x="229.00" y="247.80" font-family="'Liberation Mono', monospace" font-size="5.6" fill="#d0d0d0" stroke="#d0d0d0" stroke-width="0.16" text-anchor="start" style="white-space:pre" >Average:</text>
<text x="276.80" y="247.80" font-family="'Liberation Mono', monospace" font-size="5.6" fill="#d0d0d0" stroke="#d0d0d0" stroke-width="0.16" text-anchor="end" style="white-space:pre" >0.0%</text>
<text x="297.40" y="247.80" font-family="'Liberation Mono', monospace" font-size="5.6" fill="#d0d0d0" stroke="#d0d0d0" stroke-width="0.16" text-anchor="start" style="white-space:pre" >Min:</text>
<text x="332.00" y="247.80" font-family="'Liberation Mono', monospace" font-size="5.6" fill="#d0d0d0" stroke="#d0d0d0" stroke-width="0.16" text-anchor="end" style="white-space:pre" >0.0%</text>
<text x="353.30" y="247.80" font-family="'Liberation Mono', monospace" font-size="5.6" fill="#d0d0d0" stroke="#d0d0d0" stroke-width="0.16" text-anchor="start" style="white-space:pre" >Max:</text>
<text x="386.80" y="247.80" font-family="'Liberation Mono', monospace" font-size="5.6" fill="#d0d0d0" stroke="#d0d0d0" stroke-width="0.16" text-anchor="end" style="white-space:pre" >0.0%</text>
<rect x="403.8" y="87.7" width="4.4" height="62" fill="#1e1e1e"/>
<text x="406.00" y="118.70" font-family="'Liberation Mono', monospace" font-size="5" fill="#3a3a3a" stroke="#3a3a3a" stroke-width="0.16" text-anchor="middle" style="white-space:pre" transform="rotate(90 406 118.7)" textLength="62" lengthAdjust="spacingAndGlyphs">monitorix.org / the monitorix</text>
<rect x="416" y="85.7" width="165" height="76.8" fill="#121212"/>
<rect x="416.5" y="86.2" width="164" height="75.8" fill="none" stroke="#3a3a3a" stroke-width="1.2"/>
<rect x="452.8" y="99.7" width="111.49999999999994" height="35.89999999999999" fill="#000"/>
<polygon points="452.80,135.60 452.80,110.00 454.00,104.00 455.00,105.00 456.00,110.00 457.00,115.00 458.00,119.00 460.00,121.00 463.00,121.50 467.00,122.00 469.00,124.00 471.00,126.50 530.00,126.50 531.00,123.50 532.00,126.50 541.00,126.50 542.00,122.00 543.00,126.00 546.00,126.00 547.00,118.00 548.00,113.00 549.00,112.00 550.00,116.00 551.00,118.00 552.00,114.00 553.00,119.00 555.00,117.00 557.00,113.00 558.00,111.50 559.00,115.00 560.00,118.00 561.00,116.00 562.00,114.00 563.00,117.00 564.30,117.00 564.30,135.60" fill="#44aaee"/>
<line x1="452.8" y1="126.62" x2="564.3" y2="126.62" stroke="rgba(160,160,140,0.17)" stroke-width="0.6"/>
<line x1="452.8" y1="108.67" x2="564.3" y2="108.67" stroke="rgba(160,160,140,0.17)" stroke-width="0.6"/>
<line x1="452.8" y1="117.65" x2="564.3" y2="117.65" stroke="rgba(175,180,165,0.4)" stroke-width="0.6"/>
<line x1="452.8" y1="99.70" x2="564.3" y2="99.70" stroke="rgba(175,180,165,0.4)" stroke-width="0.6"/>
<line x1="454.51" y1="99.7" x2="454.51" y2="135.6" stroke="rgba(160,160,140,0.17)" stroke-width="0.6"/>
<line x1="459.15" y1="99.7" x2="459.15" y2="135.6" stroke="rgba(160,160,140,0.17)" stroke-width="0.6"/>
<line x1="463.80" y1="99.7" x2="463.80" y2="135.6" stroke="rgba(160,160,140,0.17)" stroke-width="0.6"/>
<line x1="473.09" y1="99.7" x2="473.09" y2="135.6" stroke="rgba(160,160,140,0.17)" stroke-width="0.6"/>
<line x1="477.73" y1="99.7" x2="477.73" y2="135.6" stroke="rgba(160,160,140,0.17)" stroke-width="0.6"/>
<line x1="482.38" y1="99.7" x2="482.38" y2="135.6" stroke="rgba(160,160,140,0.17)" stroke-width="0.6"/>
<line x1="487.03" y1="99.7" x2="487.03" y2="135.6" stroke="rgba(160,160,140,0.17)" stroke-width="0.6"/>
<line x1="491.67" y1="99.7" x2="491.67" y2="135.6" stroke="rgba(160,160,140,0.17)" stroke-width="0.6"/>
<line x1="500.96" y1="99.7" x2="500.96" y2="135.6" stroke="rgba(160,160,140,0.17)" stroke-width="0.6"/>
<line x1="505.61" y1="99.7" x2="505.61" y2="135.6" stroke="rgba(160,160,140,0.17)" stroke-width="0.6"/>
<line x1="510.26" y1="99.7" x2="510.26" y2="135.6" stroke="rgba(160,160,140,0.17)" stroke-width="0.6"/>
<line x1="514.90" y1="99.7" x2="514.90" y2="135.6" stroke="rgba(160,160,140,0.17)" stroke-width="0.6"/>
<line x1="519.55" y1="99.7" x2="519.55" y2="135.6" stroke="rgba(160,160,140,0.17)" stroke-width="0.6"/>
<line x1="528.84" y1="99.7" x2="528.84" y2="135.6" stroke="rgba(160,160,140,0.17)" stroke-width="0.6"/>
<line x1="533.48" y1="99.7" x2="533.48" y2="135.6" stroke="rgba(160,160,140,0.17)" stroke-width="0.6"/>
<line x1="538.13" y1="99.7" x2="538.13" y2="135.6" stroke="rgba(160,160,140,0.17)" stroke-width="0.6"/>
<line x1="542.78" y1="99.7" x2="542.78" y2="135.6" stroke="rgba(160,160,140,0.17)" stroke-width="0.6"/>
<line x1="547.42" y1="99.7" x2="547.42" y2="135.6" stroke="rgba(160,160,140,0.17)" stroke-width="0.6"/>
<line x1="556.71" y1="99.7" x2="556.71" y2="135.6" stroke="rgba(160,160,140,0.17)" stroke-width="0.6"/>
<line x1="561.36" y1="99.7" x2="561.36" y2="135.6" stroke="rgba(160,160,140,0.17)" stroke-width="0.6"/>
<line x1="468.44" y1="99.7" x2="468.44" y2="135.6" stroke="rgba(175,180,165,0.4)" stroke-width="0.6"/>
<line x1="496.32" y1="99.7" x2="496.32" y2="135.6" stroke="rgba(175,180,165,0.4)" stroke-width="0.6"/>
<line x1="524.19" y1="99.7" x2="524.19" y2="135.6" stroke="rgba(175,180,165,0.4)" stroke-width="0.6"/>
<line x1="552.07" y1="99.7" x2="552.07" y2="135.6" stroke="rgba(175,180,165,0.4)" stroke-width="0.6"/>
<line x1="451.0" y1="99.70" x2="452.8" y2="99.70" stroke="#777" stroke-width="0.6"/>
<line x1="451.0" y1="117.65" x2="452.8" y2="117.65" stroke="#777" stroke-width="0.6"/>
<line x1="451.0" y1="135.60" x2="452.8" y2="135.60" stroke="#777" stroke-width="0.6"/>
<path d="M451.7,98.10000000000001 L454.90000000000003,98.10000000000001 L453.3,95.5 Z" fill="#fff"/>
<path d="M566.3,134.0 L566.3,137.2 L568.6999999999999,135.6 Z" fill="#fff"/>
<text x="498.40" y="96.50" font-family="'Liberation Mono', monospace" font-size="6.56" fill="#d0d0d0" stroke="#d0d0d0" stroke-width="0.16" text-anchor="middle" style="white-space:pre" >Context switches and forks  (1day)</text>
<text x="422.60" y="117.60" font-family="'Liberation Mono', monospace" font-size="5.9" fill="#d0d0d0" stroke="#d0d0d0" stroke-width="0.16" text-anchor="middle" style="white-space:pre" transform="rotate(-90 422.6 117.6)">CS &amp; forks/s</text>
<text x="449.00" y="101.60" font-family="'Liberation Mono', monospace" font-size="5.6" fill="#d0d0d0" stroke="#d0d0d0" stroke-width="0.16" text-anchor="end" style="white-space:pre" >20 k</text>
<text x="449.00" y="119.55" font-family="'Liberation Mono', monospace" font-size="5.6" fill="#d0d0d0" stroke="#d0d0d0" stroke-width="0.16" text-anchor="end" style="white-space:pre" >10 k</text>
<text x="442.40" y="137.50" font-family="'Liberation Mono', monospace" font-size="5.6" fill="#d0d0d0" stroke="#d0d0d0" stroke-width="0.16" text-anchor="end" style="white-space:pre" >0</text>
<text x="468.44" y="143.20" font-family="'Liberation Mono', monospace" font-size="5.6" fill="#d0d0d0" stroke="#d0d0d0" stroke-width="0.16" text-anchor="middle" style="white-space:pre" >18:00</text>
<text x="496.32" y="143.20" font-family="'Liberation Mono', monospace" font-size="5.6" fill="#d0d0d0" stroke="#d0d0d0" stroke-width="0.16" text-anchor="middle" style="white-space:pre" >00:00</text>
<text x="524.19" y="143.20" font-family="'Liberation Mono', monospace" font-size="5.6" fill="#d0d0d0" stroke="#d0d0d0" stroke-width="0.16" text-anchor="middle" style="white-space:pre" >06:00</text>
<text x="552.07" y="143.20" font-family="'Liberation Mono', monospace" font-size="5.6" fill="#d0d0d0" stroke="#d0d0d0" stroke-width="0.16" text-anchor="middle" style="white-space:pre" >12:00</text>
<rect x="423.2" y="147.5" width="4.2" height="4.2" fill="#66b4ec"/>
<rect x="423.5" y="147.79999999999998" width="3.6" height="3.6" fill="none" stroke="#000" stroke-opacity="0.35" stroke-width="0.6"/>
<text x="430.00" y="151.50" font-family="'Liberation Mono', monospace" font-size="5.6" fill="#d0d0d0" stroke="#d0d0d0" stroke-width="0.16" text-anchor="start" style="white-space:pre" >Context switches</text>
<text x="509.00" y="151.50" font-family="'Liberation Mono', monospace" font-size="5.6" fill="#d0d0d0" stroke="#d0d0d0" stroke-width="0.16" text-anchor="start" style="white-space:pre" >Current:</text>
<text x="558.20" y="151.50" font-family="'Liberation Mono', monospace" font-size="5.6" fill="#d0d0d0" stroke="#d0d0d0" stroke-width="0.16" text-anchor="end" style="white-space:pre" >10407</text>
<rect x="423.2" y="154.4" width="4.2" height="4.2" fill="#6464e4"/>
<rect x="423.5" y="154.7" width="3.6" height="3.6" fill="none" stroke="#000" stroke-opacity="0.35" stroke-width="0.6"/>
<text x="430.00" y="158.40" font-family="'Liberation Mono', monospace" font-size="5.6" fill="#d0d0d0" stroke="#d0d0d0" stroke-width="0.16" text-anchor="start" style="white-space:pre" >Forks</text>
<text x="509.00" y="158.40" font-family="'Liberation Mono', monospace" font-size="5.6" fill="#d0d0d0" stroke="#d0d0d0" stroke-width="0.16" text-anchor="start" style="white-space:pre" >Current:</text>
<text x="558.20" y="158.40" font-family="'Liberation Mono', monospace" font-size="5.6" fill="#d0d0d0" stroke="#d0d0d0" stroke-width="0.16" text-anchor="end" style="white-space:pre" >4</text>
<rect x="573.8" y="87.9" width="4.4" height="63" fill="#1e1e1e"/>
<text x="576.00" y="119.40" font-family="'Liberation Mono', monospace" font-size="5" fill="#3a3a3a" stroke="#3a3a3a" stroke-width="0.16" text-anchor="middle" style="white-space:pre" transform="rotate(90 576 119.4)" textLength="63" lengthAdjust="spacingAndGlyphs">monitorix.org / the monitorix</text>
<rect x="416" y="165" width="165" height="83" fill="#121212"/>
<rect x="416.5" y="165.5" width="164" height="82" fill="none" stroke="#3a3a3a" stroke-width="1.2"/>
<rect x="452.8" y="178.2" width="111.49999999999994" height="36.80000000000001" fill="#000"/>
<polygon points="452.80,215.00 452.80,192.00 460.00,192.00 461.50,180.50 540.00,180.50 543.00,187.00 549.00,189.50 556.00,189.00 564.30,188.50 564.30,215.00" fill="#4444ee"/>
<polygon points="452.80,215.00 452.80,195.00 458.00,195.00 460.00,191.00 470.00,191.00 480.00,192.50 530.00,192.50 532.00,195.00 564.30,195.00 564.30,215.00" fill="#eeee44"/>
<line x1="452.8" y1="205.80" x2="564.3" y2="205.80" stroke="rgba(160,160,140,0.17)" stroke-width="0.6"/>
<line x1="452.8" y1="187.40" x2="564.3" y2="187.40" stroke="rgba(160,160,140,0.17)" stroke-width="0.6"/>
<line x1="452.8" y1="196.60" x2="564.3" y2="196.60" stroke="rgba(175,180,165,0.4)" stroke-width="0.6"/>
<line x1="452.8" y1="178.20" x2="564.3" y2="178.20" stroke="rgba(175,180,165,0.4)" stroke-width="0.6"/>
<line x1="454.51" y1="178.2" x2="454.51" y2="215.0" stroke="rgba(160,160,140,0.17)" stroke-width="0.6"/>
<line x1="459.15" y1="178.2" x2="459.15" y2="215.0" stroke="rgba(160,160,140,0.17)" stroke-width="0.6"/>
<line x1="463.80" y1="178.2" x2="463.80" y2="215.0" stroke="rgba(160,160,140,0.17)" stroke-width="0.6"/>
<line x1="473.09" y1="178.2" x2="473.09" y2="215.0" stroke="rgba(160,160,140,0.17)" stroke-width="0.6"/>
<line x1="477.73" y1="178.2" x2="477.73" y2="215.0" stroke="rgba(160,160,140,0.17)" stroke-width="0.6"/>
<line x1="482.38" y1="178.2" x2="482.38" y2="215.0" stroke="rgba(160,160,140,0.17)" stroke-width="0.6"/>
<line x1="487.03" y1="178.2" x2="487.03" y2="215.0" stroke="rgba(160,160,140,0.17)" stroke-width="0.6"/>
<line x1="491.67" y1="178.2" x2="491.67" y2="215.0" stroke="rgba(160,160,140,0.17)" stroke-width="0.6"/>
<line x1="500.96" y1="178.2" x2="500.96" y2="215.0" stroke="rgba(160,160,140,0.17)" stroke-width="0.6"/>
<line x1="505.61" y1="178.2" x2="505.61" y2="215.0" stroke="rgba(160,160,140,0.17)" stroke-width="0.6"/>
<line x1="510.26" y1="178.2" x2="510.26" y2="215.0" stroke="rgba(160,160,140,0.17)" stroke-width="0.6"/>
<line x1="514.90" y1="178.2" x2="514.90" y2="215.0" stroke="rgba(160,160,140,0.17)" stroke-width="0.6"/>
<line x1="519.55" y1="178.2" x2="519.55" y2="215.0" stroke="rgba(160,160,140,0.17)" stroke-width="0.6"/>
<line x1="528.84" y1="178.2" x2="528.84" y2="215.0" stroke="rgba(160,160,140,0.17)" stroke-width="0.6"/>
<line x1="533.48" y1="178.2" x2="533.48" y2="215.0" stroke="rgba(160,160,140,0.17)" stroke-width="0.6"/>
<line x1="538.13" y1="178.2" x2="538.13" y2="215.0" stroke="rgba(160,160,140,0.17)" stroke-width="0.6"/>
<line x1="542.78" y1="178.2" x2="542.78" y2="215.0" stroke="rgba(160,160,140,0.17)" stroke-width="0.6"/>
<line x1="547.42" y1="178.2" x2="547.42" y2="215.0" stroke="rgba(160,160,140,0.17)" stroke-width="0.6"/>
<line x1="556.71" y1="178.2" x2="556.71" y2="215.0" stroke="rgba(160,160,140,0.17)" stroke-width="0.6"/>
<line x1="561.36" y1="178.2" x2="561.36" y2="215.0" stroke="rgba(160,160,140,0.17)" stroke-width="0.6"/>
<line x1="468.44" y1="178.2" x2="468.44" y2="215.0" stroke="rgba(175,180,165,0.4)" stroke-width="0.6"/>
<line x1="496.32" y1="178.2" x2="496.32" y2="215.0" stroke="rgba(175,180,165,0.4)" stroke-width="0.6"/>
<line x1="524.19" y1="178.2" x2="524.19" y2="215.0" stroke="rgba(175,180,165,0.4)" stroke-width="0.6"/>
<line x1="552.07" y1="178.2" x2="552.07" y2="215.0" stroke="rgba(175,180,165,0.4)" stroke-width="0.6"/>
<line x1="451.0" y1="178.20" x2="452.8" y2="178.20" stroke="#777" stroke-width="0.6"/>
<line x1="451.0" y1="196.60" x2="452.8" y2="196.60" stroke="#777" stroke-width="0.6"/>
<line x1="451.0" y1="215.00" x2="452.8" y2="215.00" stroke="#777" stroke-width="0.6"/>
<path d="M451.7,176.6 L454.90000000000003,176.6 L453.3,174.0 Z" fill="#fff"/>
<path d="M566.3,213.4 L566.3,216.6 L568.6999999999999,215.0 Z" fill="#fff"/>
<text x="498.20" y="175.40" font-family="'Liberation Mono', monospace" font-size="6.6" fill="#d0d0d0" stroke="#d0d0d0" stroke-width="0.16" text-anchor="middle" style="white-space:pre" >VFS usage  (1day)</text>
<text x="424.00" y="196.60" font-family="'Liberation Mono', monospace" font-size="5.6" fill="#d0d0d0" stroke="#d0d0d0" stroke-width="0.16" text-anchor="middle" style="white-space:pre" transform="rotate(-90 424 196.6)">Percent (%)</text>
<text x="448.40" y="180.10" font-family="'Liberation Mono', monospace" font-size="5.6" fill="#d0d0d0" stroke="#d0d0d0" stroke-width="0.16" text-anchor="end" style="white-space:pre" >100</text>
<text x="448.40" y="198.50" font-family="'Liberation Mono', monospace" font-size="5.6" fill="#d0d0d0" stroke="#d0d0d0" stroke-width="0.16" text-anchor="end" style="white-space:pre" >50</text>
<text x="448.40" y="216.90" font-family="'Liberation Mono', monospace" font-size="5.6" fill="#d0d0d0" stroke="#d0d0d0" stroke-width="0.16" text-anchor="end" style="white-space:pre" >0</text>
<text x="468.44" y="222.20" font-family="'Liberation Mono', monospace" font-size="5.6" fill="#d0d0d0" stroke="#d0d0d0" stroke-width="0.16" text-anchor="middle" style="white-space:pre" >18:00</text>
<text x="496.32" y="222.20" font-family="'Liberation Mono', monospace" font-size="5.6" fill="#d0d0d0" stroke="#d0d0d0" stroke-width="0.16" text-anchor="middle" style="white-space:pre" >00:00</text>
<text x="524.19" y="222.20" font-family="'Liberation Mono', monospace" font-size="5.6" fill="#d0d0d0" stroke="#d0d0d0" stroke-width="0.16" text-anchor="middle" style="white-space:pre" >06:00</text>
<text x="552.07" y="222.20" font-family="'Liberation Mono', monospace" font-size="5.6" fill="#d0d0d0" stroke="#d0d0d0" stroke-width="0.16" text-anchor="middle" style="white-space:pre" >12:00</text>
<rect x="423" y="226.4" width="4.2" height="4.2" fill="#6464e4"/>
<rect x="423.3" y="226.7" width="3.6" height="3.6" fill="none" stroke="#000" stroke-opacity="0.35" stroke-width="0.6"/>
<text x="430.00" y="230.40" font-family="'Liberation Mono', monospace" font-size="5.6" fill="#d0d0d0" stroke="#d0d0d0" stroke-width="0.16" text-anchor="start" style="white-space:pre" >inode</text>
<text x="509.00" y="230.40" font-family="'Liberation Mono', monospace" font-size="5.6" fill="#d0d0d0" stroke="#d0d0d0" stroke-width="0.16" text-anchor="start" style="white-space:pre" >Current:</text>
<text x="558.20" y="230.40" font-family="'Liberation Mono', monospace" font-size="5.6" fill="#d0d0d0" stroke="#d0d0d0" stroke-width="0.16" text-anchor="end" style="white-space:pre" >70.6%</text>
<rect x="423" y="233.20000000000002" width="4.2" height="4.2" fill="#e4e46a"/>
<rect x="423.3" y="233.5" width="3.6" height="3.6" fill="none" stroke="#000" stroke-opacity="0.35" stroke-width="0.6"/>
<text x="430.00" y="237.20" font-family="'Liberation Mono', monospace" font-size="5.6" fill="#d0d0d0" stroke="#d0d0d0" stroke-width="0.16" text-anchor="start" style="white-space:pre" >dentry</text>
<text x="509.00" y="237.20" font-family="'Liberation Mono', monospace" font-size="5.6" fill="#d0d0d0" stroke="#d0d0d0" stroke-width="0.16" text-anchor="start" style="white-space:pre" >Current:</text>
<text x="558.20" y="237.20" font-family="'Liberation Mono', monospace" font-size="5.6" fill="#d0d0d0" stroke="#d0d0d0" stroke-width="0.16" text-anchor="end" style="white-space:pre" >54.0%</text>
<rect x="423" y="239.9" width="4.2" height="4.2" fill="#e060e0"/>
<rect x="423.3" y="240.2" width="3.6" height="3.6" fill="none" stroke="#000" stroke-opacity="0.35" stroke-width="0.6"/>
<text x="430.00" y="243.90" font-family="'Liberation Mono', monospace" font-size="5.6" fill="#d0d0d0" stroke="#d0d0d0" stroke-width="0.16" text-anchor="start" style="white-space:pre" >file</text>
<text x="509.00" y="243.90" font-family="'Liberation Mono', monospace" font-size="5.6" fill="#d0d0d0" stroke="#d0d0d0" stroke-width="0.16" text-anchor="start" style="white-space:pre" >Current:</text>
<text x="558.20" y="243.90" font-family="'Liberation Mono', monospace" font-size="5.6" fill="#d0d0d0" stroke="#d0d0d0" stroke-width="0.16" text-anchor="end" style="white-space:pre" >0.0%</text>
<rect x="574.0" y="167.0" width="4.4" height="62" fill="#1e1e1e"/>
<text x="576.20" y="198.00" font-family="'Liberation Mono', monospace" font-size="5" fill="#3a3a3a" stroke="#3a3a3a" stroke-width="0.16" text-anchor="middle" style="white-space:pre" transform="rotate(90 576.2 198)" textLength="62" lengthAdjust="spacingAndGlyphs">monitorix.org / the monitorix</text>
<rect x="101" y="267" width="483.5" height="160" fill="#888888"/>
<rect x="104" y="270.1" width="476.5" height="10.7" fill="#333333"/>
<text x="109.8" y="278.8" font-family="'Liberation Sans', sans-serif" font-size="9" font-weight="bold" fill="#979a28">Kernel usage per processor</text>
<rect x="340.2" y="285" width="4.7" height="140" fill="#888888"/>
<rect x="104" y="285" width="236" height="140" fill="#121212"/>
<rect x="104.5" y="285.5" width="235" height="139" fill="none" stroke="#3a3a3a" stroke-width="1.2"/>
<rect x="142.4" y="298.9" width="181.70000000000002" height="84.0" fill="#000"/>
<polygon points="143.20,382.90 143.20,370.00 144.00,365.00 145.00,366.50 146.00,364.30 147.20,366.00 148.00,364.80 149.40,367.00 150.00,373.00 150.60,376.00 151.20,372.50 151.80,376.00 152.50,376.80 200.00,377.00 295.00,377.20 296.50,371.00 298.00,369.00 299.50,372.00 301.00,370.50 303.00,373.00 305.00,372.00 307.00,368.50 308.50,371.00 310.00,373.00 312.00,372.00 314.00,370.00 316.00,373.00 319.00,371.50 322.00,373.00 324.10,372.50 324.10,382.90" fill="#4444ee"/>
<polygon points="143.20,382.90 143.20,377.90 152.00,377.90 152.60,379.20 324.10,379.20 324.10,382.90" fill="#44eeee"/>
<polygon points="143.20,382.90 143.20,379.80 324.10,379.80 324.10,382.90" fill="url(#og)"/>
<line x1="142.4" y1="378.70" x2="324.1" y2="378.70" stroke="rgba(160,160,140,0.17)" stroke-width="0.6"/>
<line x1="142.4" y1="370.30" x2="324.1" y2="370.30" stroke="rgba(160,160,140,0.17)" stroke-width="0.6"/>
<line x1="142.4" y1="361.90" x2="324.1" y2="361.90" stroke="rgba(160,160,140,0.17)" stroke-width="0.6"/>
<line x1="142.4" y1="353.50" x2="324.1" y2="353.50" stroke="rgba(160,160,140,0.17)" stroke-width="0.6"/>
<line x1="142.4" y1="345.10" x2="324.1" y2="345.10" stroke="rgba(160,160,140,0.17)" stroke-width="0.6"/>
<line x1="142.4" y1="336.70" x2="324.1" y2="336.70" stroke="rgba(160,160,140,0.17)" stroke-width="0.6"/>
<line x1="142.4" y1="328.30" x2="324.1" y2="328.30" stroke="rgba(160,160,140,0.17)" stroke-width="0.6"/>
<line x1="142.4" y1="319.90" x2="324.1" y2="319.90" stroke="rgba(160,160,140,0.17)" stroke-width="0.6"/>
<line x1="142.4" y1="311.50" x2="324.1" y2="311.50" stroke="rgba(160,160,140,0.17)" stroke-width="0.6"/>
<line x1="142.4" y1="303.10" x2="324.1" y2="303.10" stroke="rgba(160,160,140,0.17)" stroke-width="0.6"/>
<line x1="142.4" y1="374.50" x2="324.1" y2="374.50" stroke="rgba(175,180,165,0.4)" stroke-width="0.6"/>
<line x1="142.4" y1="366.10" x2="324.1" y2="366.10" stroke="rgba(175,180,165,0.4)" stroke-width="0.6"/>
<line x1="142.4" y1="357.70" x2="324.1" y2="357.70" stroke="rgba(175,180,165,0.4)" stroke-width="0.6"/>
<line x1="142.4" y1="349.30" x2="324.1" y2="349.30" stroke="rgba(175,180,165,0.4)" stroke-width="0.6"/>
<line x1="142.4" y1="340.90" x2="324.1" y2="340.90" stroke="rgba(175,180,165,0.4)" stroke-width="0.6"/>
<line x1="142.4" y1="332.50" x2="324.1" y2="332.50" stroke="rgba(175,180,165,0.4)" stroke-width="0.6"/>
<line x1="142.4" y1="324.10" x2="324.1" y2="324.10" stroke="rgba(175,180,165,0.4)" stroke-width="0.6"/>
<line x1="142.4" y1="315.70" x2="324.1" y2="315.70" stroke="rgba(175,180,165,0.4)" stroke-width="0.6"/>
<line x1="142.4" y1="307.30" x2="324.1" y2="307.30" stroke="rgba(175,180,165,0.4)" stroke-width="0.6"/>
<line x1="142.4" y1="298.90" x2="324.1" y2="298.90" stroke="rgba(175,180,165,0.4)" stroke-width="0.6"/>
<line x1="145.18" y1="298.9" x2="145.18" y2="382.9" stroke="rgba(160,160,140,0.17)" stroke-width="0.6"/>
<line x1="152.75" y1="298.9" x2="152.75" y2="382.9" stroke="rgba(160,160,140,0.17)" stroke-width="0.6"/>
<line x1="160.32" y1="298.9" x2="160.32" y2="382.9" stroke="rgba(160,160,140,0.17)" stroke-width="0.6"/>
<line x1="175.46" y1="298.9" x2="175.46" y2="382.9" stroke="rgba(160,160,140,0.17)" stroke-width="0.6"/>
<line x1="183.03" y1="298.9" x2="183.03" y2="382.9" stroke="rgba(160,160,140,0.17)" stroke-width="0.6"/>
<line x1="190.60" y1="298.9" x2="190.60" y2="382.9" stroke="rgba(160,160,140,0.17)" stroke-width="0.6"/>
<line x1="198.17" y1="298.9" x2="198.17" y2="382.9" stroke="rgba(160,160,140,0.17)" stroke-width="0.6"/>
<line x1="205.75" y1="298.9" x2="205.75" y2="382.9" stroke="rgba(160,160,140,0.17)" stroke-width="0.6"/>
<line x1="220.89" y1="298.9" x2="220.89" y2="382.9" stroke="rgba(160,160,140,0.17)" stroke-width="0.6"/>
<line x1="228.46" y1="298.9" x2="228.46" y2="382.9" stroke="rgba(160,160,140,0.17)" stroke-width="0.6"/>
<line x1="236.03" y1="298.9" x2="236.03" y2="382.9" stroke="rgba(160,160,140,0.17)" stroke-width="0.6"/>
<line x1="243.60" y1="298.9" x2="243.60" y2="382.9" stroke="rgba(160,160,140,0.17)" stroke-width="0.6"/>
<line x1="251.17" y1="298.9" x2="251.17" y2="382.9" stroke="rgba(160,160,140,0.17)" stroke-width="0.6"/>
<line x1="266.31" y1="298.9" x2="266.31" y2="382.9" stroke="rgba(160,160,140,0.17)" stroke-width="0.6"/>
<line x1="273.88" y1="298.9" x2="273.88" y2="382.9" stroke="rgba(160,160,140,0.17)" stroke-width="0.6"/>
<line x1="281.45" y1="298.9" x2="281.45" y2="382.9" stroke="rgba(160,160,140,0.17)" stroke-width="0.6"/>
<line x1="289.02" y1="298.9" x2="289.02" y2="382.9" stroke="rgba(160,160,140,0.17)" stroke-width="0.6"/>
<line x1="296.60" y1="298.9" x2="296.60" y2="382.9" stroke="rgba(160,160,140,0.17)" stroke-width="0.6"/>
<line x1="311.74" y1="298.9" x2="311.74" y2="382.9" stroke="rgba(160,160,140,0.17)" stroke-width="0.6"/>
<line x1="319.31" y1="298.9" x2="319.31" y2="382.9" stroke="rgba(160,160,140,0.17)" stroke-width="0.6"/>
<line x1="167.89" y1="298.9" x2="167.89" y2="382.9" stroke="rgba(175,180,165,0.4)" stroke-width="0.6"/>
<line x1="213.32" y1="298.9" x2="213.32" y2="382.9" stroke="rgba(175,180,165,0.4)" stroke-width="0.6"/>
<line x1="258.74" y1="298.9" x2="258.74" y2="382.9" stroke="rgba(175,180,165,0.4)" stroke-width="0.6"/>
<line x1="304.17" y1="298.9" x2="304.17" y2="382.9" stroke="rgba(175,180,165,0.4)" stroke-width="0.6"/>
<line x1="140.6" y1="383.30" x2="142.4" y2="383.30" stroke="#777" stroke-width="0.6"/>
<line x1="140.6" y1="374.90" x2="142.4" y2="374.90" stroke="#777" stroke-width="0.6"/>
<line x1="140.6" y1="366.50" x2="142.4" y2="366.50" stroke="#777" stroke-width="0.6"/>
<line x1="140.6" y1="358.10" x2="142.4" y2="358.10" stroke="#777" stroke-width="0.6"/>
<line x1="140.6" y1="349.70" x2="142.4" y2="349.70" stroke="#777" stroke-width="0.6"/>
<line x1="140.6" y1="341.30" x2="142.4" y2="341.30" stroke="#777" stroke-width="0.6"/>
<line x1="140.6" y1="332.90" x2="142.4" y2="332.90" stroke="#777" stroke-width="0.6"/>
<line x1="140.6" y1="324.50" x2="142.4" y2="324.50" stroke="#777" stroke-width="0.6"/>
<line x1="140.6" y1="316.10" x2="142.4" y2="316.10" stroke="#777" stroke-width="0.6"/>
<line x1="140.6" y1="307.70" x2="142.4" y2="307.70" stroke="#777" stroke-width="0.6"/>
<line x1="140.6" y1="299.30" x2="142.4" y2="299.30" stroke="#777" stroke-width="0.6"/>
<path d="M141.3,297.29999999999995 L144.5,297.29999999999995 L142.9,294.7 Z" fill="#fff"/>
<path d="M326.1,381.29999999999995 L326.1,384.5 L328.5,382.9 Z" fill="#fff"/>
<text x="223.50" y="296.80" font-family="'Liberation Mono', monospace" font-size="6.6" fill="#d0d0d0" stroke="#d0d0d0" stroke-width="0.16" text-anchor="middle" style="white-space:pre" >Processor 0  (1day)</text>
<text x="113.40" y="340.00" font-family="'Liberation Mono', monospace" font-size="5.8" fill="#d0d0d0" stroke="#d0d0d0" stroke-width="0.16" text-anchor="middle" style="white-space:pre" transform="rotate(-90 113.4 340)">Percent (%)</text>
<text x="138.20" y="385.20" font-family="'Liberation Mono', monospace" font-size="5.6" fill="#d0d0d0" stroke="#d0d0d0" stroke-width="0.16" text-anchor="end" style="white-space:pre" >0</text>
<text x="138.20" y="376.80" font-family="'Liberation Mono', monospace" font-size="5.6" fill="#d0d0d0" stroke="#d0d0d0" stroke-width="0.16" text-anchor="end" style="white-space:pre" >10</text>
<text x="138.20" y="368.40" font-family="'Liberation Mono', monospace" font-size="5.6" fill="#d0d0d0" stroke="#d0d0d0" stroke-width="0.16" text-anchor="end" style="white-space:pre" >20</text>
<text x="138.20" y="360.00" font-family="'Liberation Mono', monospace" font-size="5.6" fill="#d0d0d0" stroke="#d0d0d0" stroke-width="0.16" text-anchor="end" style="white-space:pre" >30</text>
<text x="138.20" y="351.60" font-family="'Liberation Mono', monospace" font-size="5.6" fill="#d0d0d0" stroke="#d0d0d0" stroke-width="0.16" text-anchor="end" style="white-space:pre" >40</text>
<text x="138.20" y="343.20" font-family="'Liberation Mono', monospace" font-size="5.6" fill="#d0d0d0" stroke="#d0d0d0" stroke-width="0.16" text-anchor="end" style="white-space:pre" >50</text>
<text x="138.20" y="334.80" font-family="'Liberation Mono', monospace" font-size="5.6" fill="#d0d0d0" stroke="#d0d0d0" stroke-width="0.16" text-anchor="end" style="white-space:pre" >60</text>
<text x="138.20" y="326.40" font-family="'Liberation Mono', monospace" font-size="5.6" fill="#d0d0d0" stroke="#d0d0d0" stroke-width="0.16" text-anchor="end" style="white-space:pre" >70</text>
<text x="138.20" y="318.00" font-family="'Liberation Mono', monospace" font-size="5.6" fill="#d0d0d0" stroke="#d0d0d0" stroke-width="0.16" text-anchor="end" style="white-space:pre" >80</text>
<text x="138.20" y="309.60" font-family="'Liberation Mono', monospace" font-size="5.6" fill="#d0d0d0" stroke="#d0d0d0" stroke-width="0.16" text-anchor="end" style="white-space:pre" >90</text>
<text x="138.20" y="301.20" font-family="'Liberation Mono', monospace" font-size="5.6" fill="#d0d0d0" stroke="#d0d0d0" stroke-width="0.16" text-anchor="end" style="white-space:pre" >100</text>
<text x="167.89" y="389.90" font-family="'Liberation Mono', monospace" font-size="5.6" fill="#d0d0d0" stroke="#d0d0d0" stroke-width="0.16" text-anchor="middle" style="white-space:pre" >18:00</text>
<text x="213.32" y="389.90" font-family="'Liberation Mono', monospace" font-size="5.6" fill="#d0d0d0" stroke="#d0d0d0" stroke-width="0.16" text-anchor="middle" style="white-space:pre" >00:00</text>
<text x="258.74" y="389.90" font-family="'Liberation Mono', monospace" font-size="5.6" fill="#d0d0d0" stroke="#d0d0d0" stroke-width="0.16" text-anchor="middle" style="white-space:pre" >06:00</text>
<text x="304.17" y="389.90" font-family="'Liberation Mono', monospace" font-size="5.6" fill="#d0d0d0" stroke="#d0d0d0" stroke-width="0.16" text-anchor="middle" style="white-space:pre" >12:00</text>
<rect x="113.4" y="394.5" width="4.2" height="4.2" fill="#6464e4"/>
<rect x="113.7" y="394.8" width="3.6" height="3.6" fill="none" stroke="#000" stroke-opacity="0.35" stroke-width="0.6"/>
<text x="119.50" y="398.50" font-family="'Liberation Mono', monospace" font-size="5.6" fill="#d0d0d0" stroke="#d0d0d0" stroke-width="0.16" text-anchor="start" style="white-space:pre" >user</text>
<text x="154.70" y="398.50" font-family="'Liberation Mono', monospace" font-size="5.6" fill="#d0d0d0" stroke="#d0d0d0" stroke-width="0.16" text-anchor="start" style="white-space:pre" >Cur:</text>
<text x="188.20" y="398.50" font-family="'Liberation Mono', monospace" font-size="5.6" fill="#d0d0d0" stroke="#d0d0d0" stroke-width="0.16" text-anchor="end" style="white-space:pre" >9.7%</text>
<text x="202.40" y="398.50" font-family="'Liberation Mono', monospace" font-size="5.6" fill="#d0d0d0" stroke="#d0d0d0" stroke-width="0.16" text-anchor="start" style="white-space:pre" >Avg:</text>
<text x="237.00" y="398.50" font-family="'Liberation Mono', monospace" font-size="5.6" fill="#d0d0d0" stroke="#d0d0d0" stroke-width="0.16" text-anchor="end" style="white-space:pre" >8.3%</text>
<text x="251.00" y="398.50" font-family="'Liberation Mono', monospace" font-size="5.6" fill="#d0d0d0" stroke="#d0d0d0" stroke-width="0.16" text-anchor="start" style="white-space:pre" >Min:</text>
<text x="285.00" y="398.50" font-family="'Liberation Mono', monospace" font-size="5.6" fill="#d0d0d0" stroke="#d0d0d0" stroke-width="0.16" text-anchor="end" style="white-space:pre" >4.9%</text>
<text x="299.40" y="398.50" font-family="'Liberation Mono', monospace" font-size="5.6" fill="#d0d0d0" stroke="#d0d0d0" stroke-width="0.16" text-anchor="start" style="white-space:pre" >Max:</text>
<text x="333.00" y="398.50" font-family="'Liberation Mono', monospace" font-size="5.6" fill="#d0d0d0" stroke="#d0d0d0" stroke-width="0.16" text-anchor="end" style="white-space:pre" >22.5%</text>
<rect x="113.4" y="401.2" width="4.2" height="4.2" fill="#e4e46a"/>
<rect x="113.7" y="401.5" width="3.6" height="3.6" fill="none" stroke="#000" stroke-opacity="0.35" stroke-width="0.6"/>
<text x="119.50" y="405.20" font-family="'Liberation Mono', monospace" font-size="5.6" fill="#d0d0d0" stroke="#d0d0d0" stroke-width="0.16" text-anchor="start" style="white-space:pre" >nice</text>
<text x="154.70" y="405.20" font-family="'Liberation Mono', monospace" font-size="5.6" fill="#d0d0d0" stroke="#d0d0d0" stroke-width="0.16" text-anchor="start" style="white-space:pre" >Cur:</text>
<text x="188.20" y="405.20" font-family="'Liberation Mono', monospace" font-size="5.6" fill="#d0d0d0" stroke="#d0d0d0" stroke-width="0.16" text-anchor="end" style="white-space:pre" >0.0%</text>
<text x="202.40" y="405.20" font-family="'Liberation Mono', monospace" font-size="5.6" fill="#d0d0d0" stroke="#d0d0d0" stroke-width="0.16" text-anchor="start" style="white-space:pre" >Avg:</text>
<text x="237.00" y="405.20" font-family="'Liberation Mono', monospace" font-size="5.6" fill="#d0d0d0" stroke="#d0d0d0" stroke-width="0.16" text-anchor="end" style="white-space:pre" >0.0%</text>
<text x="251.00" y="405.20" font-family="'Liberation Mono', monospace" font-size="5.6" fill="#d0d0d0" stroke="#d0d0d0" stroke-width="0.16" text-anchor="start" style="white-space:pre" >Min:</text>
<text x="285.00" y="405.20" font-family="'Liberation Mono', monospace" font-size="5.6" fill="#d0d0d0" stroke="#d0d0d0" stroke-width="0.16" text-anchor="end" style="white-space:pre" >0.0%</text>
<text x="299.40" y="405.20" font-family="'Liberation Mono', monospace" font-size="5.6" fill="#d0d0d0" stroke="#d0d0d0" stroke-width="0.16" text-anchor="start" style="white-space:pre" >Max:</text>
<text x="333.00" y="405.20" font-family="'Liberation Mono', monospace" font-size="5.6" fill="#d0d0d0" stroke="#d0d0d0" stroke-width="0.16" text-anchor="end" style="white-space:pre" >0.1%</text>
<rect x="113.4" y="407.9" width="4.2" height="4.2" fill="#6ae4ea"/>
<rect x="113.7" y="408.2" width="3.6" height="3.6" fill="none" stroke="#000" stroke-opacity="0.35" stroke-width="0.6"/>
<text x="119.50" y="411.90" font-family="'Liberation Mono', monospace" font-size="5.6" fill="#d0d0d0" stroke="#d0d0d0" stroke-width="0.16" text-anchor="start" style="white-space:pre" >system</text>
<text x="154.70" y="411.90" font-family="'Liberation Mono', monospace" font-size="5.6" fill="#d0d0d0" stroke="#d0d0d0" stroke-width="0.16" text-anchor="start" style="white-space:pre" >Cur:</text>
<text x="188.20" y="411.90" font-family="'Liberation Mono', monospace" font-size="5.6" fill="#d0d0d0" stroke="#d0d0d0" stroke-width="0.16" text-anchor="end" style="white-space:pre" >3.3%</text>
<text x="202.40" y="411.90" font-family="'Liberation Mono', monospace" font-size="5.6" fill="#d0d0d0" stroke="#d0d0d0" stroke-width="0.16" text-anchor="start" style="white-space:pre" >Avg:</text>
<text x="237.00" y="411.90" font-family="'Liberation Mono', monospace" font-size="5.6" fill="#d0d0d0" stroke="#d0d0d0" stroke-width="0.16" text-anchor="end" style="white-space:pre" >2.8%</text>
<text x="251.00" y="411.90" font-family="'Liberation Mono', monospace" font-size="5.6" fill="#d0d0d0" stroke="#d0d0d0" stroke-width="0.16" text-anchor="start" style="white-space:pre" >Min:</text>
<text x="285.00" y="411.90" font-family="'Liberation Mono', monospace" font-size="5.6" fill="#d0d0d0" stroke="#d0d0d0" stroke-width="0.16" text-anchor="end" style="white-space:pre" >1.8%</text>
<text x="299.40" y="411.90" font-family="'Liberation Mono', monospace" font-size="5.6" fill="#d0d0d0" stroke="#d0d0d0" stroke-width="0.16" text-anchor="start" style="white-space:pre" >Max:</text>
<text x="333.00" y="411.90" font-family="'Liberation Mono', monospace" font-size="5.6" fill="#d0d0d0" stroke="#d0d0d0" stroke-width="0.16" text-anchor="end" style="white-space:pre" >6.4%</text>
<rect x="113.4" y="414.59999999999997" width="4.2" height="4.2" fill="#e060e0"/>
<rect x="113.7" y="414.9" width="3.6" height="3.6" fill="none" stroke="#000" stroke-opacity="0.35" stroke-width="0.6"/>
<text x="119.50" y="418.60" font-family="'Liberation Mono', monospace" font-size="5.6" fill="#d0d0d0" stroke="#d0d0d0" stroke-width="0.16" text-anchor="start" style="white-space:pre" >I/O wait</text>
<text x="154.70" y="418.60" font-family="'Liberation Mono', monospace" font-size="5.6" fill="#d0d0d0" stroke="#d0d0d0" stroke-width="0.16" text-anchor="start" style="white-space:pre" >Cur:</text>
<text x="188.20" y="418.60" font-family="'Liberation Mono', monospace" font-size="5.6" fill="#d0d0d0" stroke="#d0d0d0" stroke-width="0.16" text-anchor="end" style="white-space:pre" >0.1%</text>
<text x="202.40" y="418.60" font-family="'Liberation Mono', monospace" font-size="5.6" fill="#d0d0d0" stroke="#d0d0d0" stroke-width="0.16" text-anchor="start" style="white-space:pre" >Avg:</text>
<text x="237.00" y="418.60" font-family="'Liberation Mono', monospace" font-size="5.6" fill="#d0d0d0" stroke="#d0d0d0" stroke-width="0.16" text-anchor="end" style="white-space:pre" >0.1%</text>
<text x="251.00" y="418.60" font-family="'Liberation Mono', monospace" font-size="5.6" fill="#d0d0d0" stroke="#d0d0d0" stroke-width="0.16" text-anchor="start" style="white-space:pre" >Min:</text>
<text x="285.00" y="418.60" font-family="'Liberation Mono', monospace" font-size="5.6" fill="#d0d0d0" stroke="#d0d0d0" stroke-width="0.16" text-anchor="end" style="white-space:pre" >0.0%</text>
<text x="299.40" y="418.60" font-family="'Liberation Mono', monospace" font-size="5.6" fill="#d0d0d0" stroke="#d0d0d0" stroke-width="0.16" text-anchor="start" style="white-space:pre" >Max:</text>
<text x="333.00" y="418.60" font-family="'Liberation Mono', monospace" font-size="5.6" fill="#d0d0d0" stroke="#d0d0d0" stroke-width="0.16" text-anchor="end" style="white-space:pre" >1.1%</text>
<rect x="333.3" y="287.0" width="4.4" height="62" fill="#1e1e1e"/>
<text x="335.50" y="318.00" font-family="'Liberation Mono', monospace" font-size="5" fill="#3a3a3a" stroke="#3a3a3a" stroke-width="0.16" text-anchor="middle" style="white-space:pre" transform="rotate(90 335.5 318)" textLength="62" lengthAdjust="spacingAndGlyphs">monitorix.org / the monitorix</text>
<rect x="344.7" y="285" width="236" height="140" fill="#121212"/>
<rect x="345.2" y="285.5" width="235" height="139" fill="none" stroke="#3a3a3a" stroke-width="1.2"/>
<rect x="383.1" y="298.9" width="181.69999999999993" height="84.0" fill="#000"/>
<polygon points="383.90,382.90 383.90,370.00 384.70,365.00 385.70,366.50 386.70,364.30 387.90,366.00 388.70,364.80 390.10,367.00 390.70,373.00 391.30,376.00 391.90,372.50 392.50,376.00 393.20,376.80 440.70,377.00 535.70,377.20 537.20,371.00 538.70,369.00 540.20,372.00 541.70,370.50 543.70,373.00 545.70,372.00 547.70,368.50 549.20,371.00 550.70,373.00 552.70,372.00 554.70,370.00 556.70,373.00 559.70,371.50 562.70,373.00 564.80,372.50 564.80,382.90" fill="#4444ee"/>
<polygon points="383.90,382.90 383.90,377.90 392.70,377.90 393.30,379.20 564.80,379.20 564.80,382.90" fill="#44eeee"/>
<polygon points="383.90,382.90 383.90,379.80 564.80,379.80 564.80,382.90" fill="url(#og)"/>
<line x1="383.1" y1="378.70" x2="564.8" y2="378.70" stroke="rgba(160,160,140,0.17)" stroke-width="0.6"/>
<line x1="383.1" y1="370.30" x2="564.8" y2="370.30" stroke="rgba(160,160,140,0.17)" stroke-width="0.6"/>
<line x1="383.1" y1="361.90" x2="564.8" y2="361.90" stroke="rgba(160,160,140,0.17)" stroke-width="0.6"/>
<line x1="383.1" y1="353.50" x2="564.8" y2="353.50" stroke="rgba(160,160,140,0.17)" stroke-width="0.6"/>
<line x1="383.1" y1="345.10" x2="564.8" y2="345.10" stroke="rgba(160,160,140,0.17)" stroke-width="0.6"/>
<line x1="383.1" y1="336.70" x2="564.8" y2="336.70" stroke="rgba(160,160,140,0.17)" stroke-width="0.6"/>
<line x1="383.1" y1="328.30" x2="564.8" y2="328.30" stroke="rgba(160,160,140,0.17)" stroke-width="0.6"/>
<line x1="383.1" y1="319.90" x2="564.8" y2="319.90" stroke="rgba(160,160,140,0.17)" stroke-width="0.6"/>
<line x1="383.1" y1="311.50" x2="564.8" y2="311.50" stroke="rgba(160,160,140,0.17)" stroke-width="0.6"/>
<line x1="383.1" y1="303.10" x2="564.8" y2="303.10" stroke="rgba(160,160,140,0.17)" stroke-width="0.6"/>
<line x1="383.1" y1="374.50" x2="564.8" y2="374.50" stroke="rgba(175,180,165,0.4)" stroke-width="0.6"/>
<line x1="383.1" y1="366.10" x2="564.8" y2="366.10" stroke="rgba(175,180,165,0.4)" stroke-width="0.6"/>
<line x1="383.1" y1="357.70" x2="564.8" y2="357.70" stroke="rgba(175,180,165,0.4)" stroke-width="0.6"/>
<line x1="383.1" y1="349.30" x2="564.8" y2="349.30" stroke="rgba(175,180,165,0.4)" stroke-width="0.6"/>
<line x1="383.1" y1="340.90" x2="564.8" y2="340.90" stroke="rgba(175,180,165,0.4)" stroke-width="0.6"/>
<line x1="383.1" y1="332.50" x2="564.8" y2="332.50" stroke="rgba(175,180,165,0.4)" stroke-width="0.6"/>
<line x1="383.1" y1="324.10" x2="564.8" y2="324.10" stroke="rgba(175,180,165,0.4)" stroke-width="0.6"/>
<line x1="383.1" y1="315.70" x2="564.8" y2="315.70" stroke="rgba(175,180,165,0.4)" stroke-width="0.6"/>
<line x1="383.1" y1="307.30" x2="564.8" y2="307.30" stroke="rgba(175,180,165,0.4)" stroke-width="0.6"/>
<line x1="383.1" y1="298.90" x2="564.8" y2="298.90" stroke="rgba(175,180,165,0.4)" stroke-width="0.6"/>
<line x1="385.88" y1="298.9" x2="385.88" y2="382.9" stroke="rgba(160,160,140,0.17)" stroke-width="0.6"/>
<line x1="393.45" y1="298.9" x2="393.45" y2="382.9" stroke="rgba(160,160,140,0.17)" stroke-width="0.6"/>
<line x1="401.02" y1="298.9" x2="401.02" y2="382.9" stroke="rgba(160,160,140,0.17)" stroke-width="0.6"/>
<line x1="416.16" y1="298.9" x2="416.16" y2="382.9" stroke="rgba(160,160,140,0.17)" stroke-width="0.6"/>
<line x1="423.73" y1="298.9" x2="423.73" y2="382.9" stroke="rgba(160,160,140,0.17)" stroke-width="0.6"/>
<line x1="431.30" y1="298.9" x2="431.30" y2="382.9" stroke="rgba(160,160,140,0.17)" stroke-width="0.6"/>
<line x1="438.87" y1="298.9" x2="438.87" y2="382.9" stroke="rgba(160,160,140,0.17)" stroke-width="0.6"/>
<line x1="446.45" y1="298.9" x2="446.45" y2="382.9" stroke="rgba(160,160,140,0.17)" stroke-width="0.6"/>
<line x1="461.59" y1="298.9" x2="461.59" y2="382.9" stroke="rgba(160,160,140,0.17)" stroke-width="0.6"/>
<line x1="469.16" y1="298.9" x2="469.16" y2="382.9" stroke="rgba(160,160,140,0.17)" stroke-width="0.6"/>
<line x1="476.73" y1="298.9" x2="476.73" y2="382.9" stroke="rgba(160,160,140,0.17)" stroke-width="0.6"/>
<line x1="484.30" y1="298.9" x2="484.30" y2="382.9" stroke="rgba(160,160,140,0.17)" stroke-width="0.6"/>
<line x1="491.87" y1="298.9" x2="491.87" y2="382.9" stroke="rgba(160,160,140,0.17)" stroke-width="0.6"/>
<line x1="507.01" y1="298.9" x2="507.01" y2="382.9" stroke="rgba(160,160,140,0.17)" stroke-width="0.6"/>
<line x1="514.58" y1="298.9" x2="514.58" y2="382.9" stroke="rgba(160,160,140,0.17)" stroke-width="0.6"/>
<line x1="522.15" y1="298.9" x2="522.15" y2="382.9" stroke="rgba(160,160,140,0.17)" stroke-width="0.6"/>
<line x1="529.72" y1="298.9" x2="529.72" y2="382.9" stroke="rgba(160,160,140,0.17)" stroke-width="0.6"/>
<line x1="537.30" y1="298.9" x2="537.30" y2="382.9" stroke="rgba(160,160,140,0.17)" stroke-width="0.6"/>
<line x1="552.44" y1="298.9" x2="552.44" y2="382.9" stroke="rgba(160,160,140,0.17)" stroke-width="0.6"/>
<line x1="560.01" y1="298.9" x2="560.01" y2="382.9" stroke="rgba(160,160,140,0.17)" stroke-width="0.6"/>
<line x1="408.59" y1="298.9" x2="408.59" y2="382.9" stroke="rgba(175,180,165,0.4)" stroke-width="0.6"/>
<line x1="454.02" y1="298.9" x2="454.02" y2="382.9" stroke="rgba(175,180,165,0.4)" stroke-width="0.6"/>
<line x1="499.44" y1="298.9" x2="499.44" y2="382.9" stroke="rgba(175,180,165,0.4)" stroke-width="0.6"/>
<line x1="544.87" y1="298.9" x2="544.87" y2="382.9" stroke="rgba(175,180,165,0.4)" stroke-width="0.6"/>
<line x1="381.3" y1="383.30" x2="383.1" y2="383.30" stroke="#777" stroke-width="0.6"/>
<line x1="381.3" y1="374.90" x2="383.1" y2="374.90" stroke="#777" stroke-width="0.6"/>
<line x1="381.3" y1="366.50" x2="383.1" y2="366.50" stroke="#777" stroke-width="0.6"/>
<line x1="381.3" y1="358.10" x2="383.1" y2="358.10" stroke="#777" stroke-width="0.6"/>
<line x1="381.3" y1="349.70" x2="383.1" y2="349.70" stroke="#777" stroke-width="0.6"/>
<line x1="381.3" y1="341.30" x2="383.1" y2="341.30" stroke="#777" stroke-width="0.6"/>
<line x1="381.3" y1="332.90" x2="383.1" y2="332.90" stroke="#777" stroke-width="0.6"/>
<line x1="381.3" y1="324.50" x2="383.1" y2="324.50" stroke="#777" stroke-width="0.6"/>
<line x1="381.3" y1="316.10" x2="383.1" y2="316.10" stroke="#777" stroke-width="0.6"/>
<line x1="381.3" y1="307.70" x2="383.1" y2="307.70" stroke="#777" stroke-width="0.6"/>
<line x1="381.3" y1="299.30" x2="383.1" y2="299.30" stroke="#777" stroke-width="0.6"/>
<path d="M382.0,297.29999999999995 L385.20000000000005,297.29999999999995 L383.6,294.7 Z" fill="#fff"/>
<path d="M566.8,381.29999999999995 L566.8,384.5 L569.1999999999999,382.9 Z" fill="#fff"/>
<text x="464.20" y="296.80" font-family="'Liberation Mono', monospace" font-size="6.6" fill="#d0d0d0" stroke="#d0d0d0" stroke-width="0.16" text-anchor="middle" style="white-space:pre" >Processor 1  (1day)</text>
<text x="354.10" y="340.00" font-family="'Liberation Mono', monospace" font-size="5.8" fill="#d0d0d0" stroke="#d0d0d0" stroke-width="0.16" text-anchor="middle" style="white-space:pre" transform="rotate(-90 354.1 340)">Percent (%)</text>
<text x="378.90" y="385.20" font-family="'Liberation Mono', monospace" font-size="5.6" fill="#d0d0d0" stroke="#d0d0d0" stroke-width="0.16" text-anchor="end" style="white-space:pre" >0</text>
<text x="378.90" y="376.80" font-family="'Liberation Mono', monospace" font-size="5.6" fill="#d0d0d0" stroke="#d0d0d0" stroke-width="0.16" text-anchor="end" style="white-space:pre" >10</text>
<text x="378.90" y="368.40" font-family="'Liberation Mono', monospace" font-size="5.6" fill="#d0d0d0" stroke="#d0d0d0" stroke-width="0.16" text-anchor="end" style="white-space:pre" >20</text>
<text x="378.90" y="360.00" font-family="'Liberation Mono', monospace" font-size="5.6" fill="#d0d0d0" stroke="#d0d0d0" stroke-width="0.16" text-anchor="end" style="white-space:pre" >30</text>
<text x="378.90" y="351.60" font-family="'Liberation Mono', monospace" font-size="5.6" fill="#d0d0d0" stroke="#d0d0d0" stroke-width="0.16" text-anchor="end" style="white-space:pre" >40</text>
<text x="378.90" y="343.20" font-family="'Liberation Mono', monospace" font-size="5.6" fill="#d0d0d0" stroke="#d0d0d0" stroke-width="0.16" text-anchor="end" style="white-space:pre" >50</text>
<text x="378.90" y="334.80" font-family="'Liberation Mono', monospace" font-size="5.6" fill="#d0d0d0" stroke="#d0d0d0" stroke-width="0.16" text-anchor="end" style="white-space:pre" >60</text>
<text x="378.90" y="326.40" font-family="'Liberation Mono', monospace" font-size="5.6" fill="#d0d0d0" stroke="#d0d0d0" stroke-width="0.16" text-anchor="end" style="white-space:pre" >70</text>
<text x="378.90" y="318.00" font-family="'Liberation Mono', monospace" font-size="5.6" fill="#d0d0d0" stroke="#d0d0d0" stroke-width="0.16" text-anchor="end" style="white-space:pre" >80</text>
<text x="378.90" y="309.60" font-family="'Liberation Mono', monospace" font-size="5.6" fill="#d0d0d0" stroke="#d0d0d0" stroke-width="0.16" text-anchor="end" style="white-space:pre" >90</text>
<text x="378.90" y="301.20" font-family="'Liberation Mono', monospace" font-size="5.6" fill="#d0d0d0" stroke="#d0d0d0" stroke-width="0.16" text-anchor="end" style="white-space:pre" >100</text>
<text x="408.59" y="389.90" font-family="'Liberation Mono', monospace" font-size="5.6" fill="#d0d0d0" stroke="#d0d0d0" stroke-width="0.16" text-anchor="middle" style="white-space:pre" >18:00</text>
<text x="454.02" y="389.90" font-family="'Liberation Mono', monospace" font-size="5.6" fill="#d0d0d0" stroke="#d0d0d0" stroke-width="0.16" text-anchor="middle" style="white-space:pre" >00:00</text>
<text x="499.44" y="389.90" font-family="'Liberation Mono', monospace" font-size="5.6" fill="#d0d0d0" stroke="#d0d0d0" stroke-width="0.16" text-anchor="middle" style="white-space:pre" >06:00</text>
<text x="544.87" y="389.90" font-family="'Liberation Mono', monospace" font-size="5.6" fill="#d0d0d0" stroke="#d0d0d0" stroke-width="0.16" text-anchor="middle" style="white-space:pre" >12:00</text>
<rect x="354.1" y="394.5" width="4.2" height="4.2" fill="#6464e4"/>
<rect x="354.40000000000003" y="394.8" width="3.6" height="3.6" fill="none" stroke="#000" stroke-opacity="0.35" stroke-width="0.6"/>
<text x="360.20" y="398.50" font-family="'Liberation Mono', monospace" font-size="5.6" fill="#d0d0d0" stroke="#d0d0d0" stroke-width="0.16" text-anchor="start" style="white-space:pre" >user</text>
<text x="395.40" y="398.50" font-family="'Liberation Mono', monospace" font-size="5.6" fill="#d0d0d0" stroke="#d0d0d0" stroke-width="0.16" text-anchor="start" style="white-space:pre" >Cur:</text>
<text x="428.90" y="398.50" font-family="'Liberation Mono', monospace" font-size="5.6" fill="#d0d0d0" stroke="#d0d0d0" stroke-width="0.16" text-anchor="end" style="white-space:pre" >9.0%</text>
<text x="443.10" y="398.50" font-family="'Liberation Mono', monospace" font-size="5.6" fill="#d0d0d0" stroke="#d0d0d0" stroke-width="0.16" text-anchor="start" style="white-space:pre" >Avg:</text>
<text x="477.70" y="398.50" font-family="'Liberation Mono', monospace" font-size="5.6" fill="#d0d0d0" stroke="#d0d0d0" stroke-width="0.16" text-anchor="end" style="white-space:pre" >7.5%</text>
<text x="491.70" y="398.50" font-family="'Liberation Mono', monospace" font-size="5.6" fill="#d0d0d0" stroke="#d0d0d0" stroke-width="0.16" text-anchor="start" style="white-space:pre" >Min:</text>
<text x="525.70" y="398.50" font-family="'Liberation Mono', monospace" font-size="5.6" fill="#d0d0d0" stroke="#d0d0d0" stroke-width="0.16" text-anchor="end" style="white-space:pre" >4.3%</text>
<text x="540.10" y="398.50" font-family="'Liberation Mono', monospace" font-size="5.6" fill="#d0d0d0" stroke="#d0d0d0" stroke-width="0.16" text-anchor="start" style="white-space:pre" >Max:</text>
<text x="573.70" y="398.50" font-family="'Liberation Mono', monospace" font-size="5.6" fill="#d0d0d0" stroke="#d0d0d0" stroke-width="0.16" text-anchor="end" style="white-space:pre" >22.1%</text>
<rect x="354.1" y="401.2" width="4.2" height="4.2" fill="#e4e46a"/>
<rect x="354.40000000000003" y="401.5" width="3.6" height="3.6" fill="none" stroke="#000" stroke-opacity="0.35" stroke-width="0.6"/>
<text x="360.20" y="405.20" font-family="'Liberation Mono', monospace" font-size="5.6" fill="#d0d0d0" stroke="#d0d0d0" stroke-width="0.16" text-anchor="start" style="white-space:pre" >nice</text>
<text x="395.40" y="405.20" font-family="'Liberation Mono', monospace" font-size="5.6" fill="#d0d0d0" stroke="#d0d0d0" stroke-width="0.16" text-anchor="start" style="white-space:pre" >Cur:</text>
<text x="428.90" y="405.20" font-family="'Liberation Mono', monospace" font-size="5.6" fill="#d0d0d0" stroke="#d0d0d0" stroke-width="0.16" text-anchor="end" style="white-space:pre" >0.0%</text>
<text x="443.10" y="405.20" font-family="'Liberation Mono', monospace" font-size="5.6" fill="#d0d0d0" stroke="#d0d0d0" stroke-width="0.16" text-anchor="start" style="white-space:pre" >Avg:</text>
<text x="477.70" y="405.20" font-family="'Liberation Mono', monospace" font-size="5.6" fill="#d0d0d0" stroke="#d0d0d0" stroke-width="0.16" text-anchor="end" style="white-space:pre" >0.0%</text>
<text x="491.70" y="405.20" font-family="'Liberation Mono', monospace" font-size="5.6" fill="#d0d0d0" stroke="#d0d0d0" stroke-width="0.16" text-anchor="start" style="white-space:pre" >Min:</text>
<text x="525.70" y="405.20" font-family="'Liberation Mono', monospace" font-size="5.6" fill="#d0d0d0" stroke="#d0d0d0" stroke-width="0.16" text-anchor="end" style="white-space:pre" >0.0%</text>
<text x="540.10" y="405.20" font-family="'Liberation Mono', monospace" font-size="5.6" fill="#d0d0d0" stroke="#d0d0d0" stroke-width="0.16" text-anchor="start" style="white-space:pre" >Max:</text>
<text x="573.70" y="405.20" font-family="'Liberation Mono', monospace" font-size="5.6" fill="#d0d0d0" stroke="#d0d0d0" stroke-width="0.16" text-anchor="end" style="white-space:pre" >0.1%</text>
<rect x="354.1" y="407.9" width="4.2" height="4.2" fill="#6ae4ea"/>
<rect x="354.40000000000003" y="408.2" width="3.6" height="3.6" fill="none" stroke="#000" stroke-opacity="0.35" stroke-width="0.6"/>
<text x="360.20" y="411.90" font-family="'Liberation Mono', monospace" font-size="5.6" fill="#d0d0d0" stroke="#d0d0d0" stroke-width="0.16" text-anchor="start" style="white-space:pre" >system</text>
<text x="395.40" y="411.90" font-family="'Liberation Mono', monospace" font-size="5.6" fill="#d0d0d0" stroke="#d0d0d0" stroke-width="0.16" text-anchor="start" style="white-space:pre" >Cur:</text>
<text x="428.90" y="411.90" font-family="'Liberation Mono', monospace" font-size="5.6" fill="#d0d0d0" stroke="#d0d0d0" stroke-width="0.16" text-anchor="end" style="white-space:pre" >2.9%</text>
<text x="443.10" y="411.90" font-family="'Liberation Mono', monospace" font-size="5.6" fill="#d0d0d0" stroke="#d0d0d0" stroke-width="0.16" text-anchor="start" style="white-space:pre" >Avg:</text>
<text x="477.70" y="411.90" font-family="'Liberation Mono', monospace" font-size="5.6" fill="#d0d0d0" stroke="#d0d0d0" stroke-width="0.16" text-anchor="end" style="white-space:pre" >2.5%</text>
<text x="491.70" y="411.90" font-family="'Liberation Mono', monospace" font-size="5.6" fill="#d0d0d0" stroke="#d0d0d0" stroke-width="0.16" text-anchor="start" style="white-space:pre" >Min:</text>
<text x="525.70" y="411.90" font-family="'Liberation Mono', monospace" font-size="5.6" fill="#d0d0d0" stroke="#d0d0d0" stroke-width="0.16" text-anchor="end" style="white-space:pre" >1.7%</text>
<text x="540.10" y="411.90" font-family="'Liberation Mono', monospace" font-size="5.6" fill="#d0d0d0" stroke="#d0d0d0" stroke-width="0.16" text-anchor="start" style="white-space:pre" >Max:</text>
<text x="573.70" y="411.90" font-family="'Liberation Mono', monospace" font-size="5.6" fill="#d0d0d0" stroke="#d0d0d0" stroke-width="0.16" text-anchor="end" style="white-space:pre" >5.5%</text>
<rect x="354.1" y="414.59999999999997" width="4.2" height="4.2" fill="#e060e0"/>
<rect x="354.40000000000003" y="414.9" width="3.6" height="3.6" fill="none" stroke="#000" stroke-opacity="0.35" stroke-width="0.6"/>
<text x="360.20" y="418.60" font-family="'Liberation Mono', monospace" font-size="5.6" fill="#d0d0d0" stroke="#d0d0d0" stroke-width="0.16" text-anchor="start" style="white-space:pre" >I/O wait</text>
<text x="395.40" y="418.60" font-family="'Liberation Mono', monospace" font-size="5.6" fill="#d0d0d0" stroke="#d0d0d0" stroke-width="0.16" text-anchor="start" style="white-space:pre" >Cur:</text>
<text x="428.90" y="418.60" font-family="'Liberation Mono', monospace" font-size="5.6" fill="#d0d0d0" stroke="#d0d0d0" stroke-width="0.16" text-anchor="end" style="white-space:pre" >0.1%</text>
<text x="443.10" y="418.60" font-family="'Liberation Mono', monospace" font-size="5.6" fill="#d0d0d0" stroke="#d0d0d0" stroke-width="0.16" text-anchor="start" style="white-space:pre" >Avg:</text>
<text x="477.70" y="418.60" font-family="'Liberation Mono', monospace" font-size="5.6" fill="#d0d0d0" stroke="#d0d0d0" stroke-width="0.16" text-anchor="end" style="white-space:pre" >0.1%</text>
<text x="491.70" y="418.60" font-family="'Liberation Mono', monospace" font-size="5.6" fill="#d0d0d0" stroke="#d0d0d0" stroke-width="0.16" text-anchor="start" style="white-space:pre" >Min:</text>
<text x="525.70" y="418.60" font-family="'Liberation Mono', monospace" font-size="5.6" fill="#d0d0d0" stroke="#d0d0d0" stroke-width="0.16" text-anchor="end" style="white-space:pre" >0.0%</text>
<text x="540.10" y="418.60" font-family="'Liberation Mono', monospace" font-size="5.6" fill="#d0d0d0" stroke="#d0d0d0" stroke-width="0.16" text-anchor="start" style="white-space:pre" >Max:</text>
<text x="573.70" y="418.60" font-family="'Liberation Mono', monospace" font-size="5.6" fill="#d0d0d0" stroke="#d0d0d0" stroke-width="0.16" text-anchor="end" style="white-space:pre" >1.0%</text>
<rect x="574.0" y="287.0" width="4.4" height="62" fill="#1e1e1e"/>
<text x="576.20" y="318.00" font-family="'Liberation Mono', monospace" font-size="5" fill="#3a3a3a" stroke="#3a3a3a" stroke-width="0.16" text-anchor="middle" style="white-space:pre" transform="rotate(90 576.2 318)" textLength="62" lengthAdjust="spacingAndGlyphs">monitorix.org / the monitorix</text>
</svg>
</svg></body></html>
